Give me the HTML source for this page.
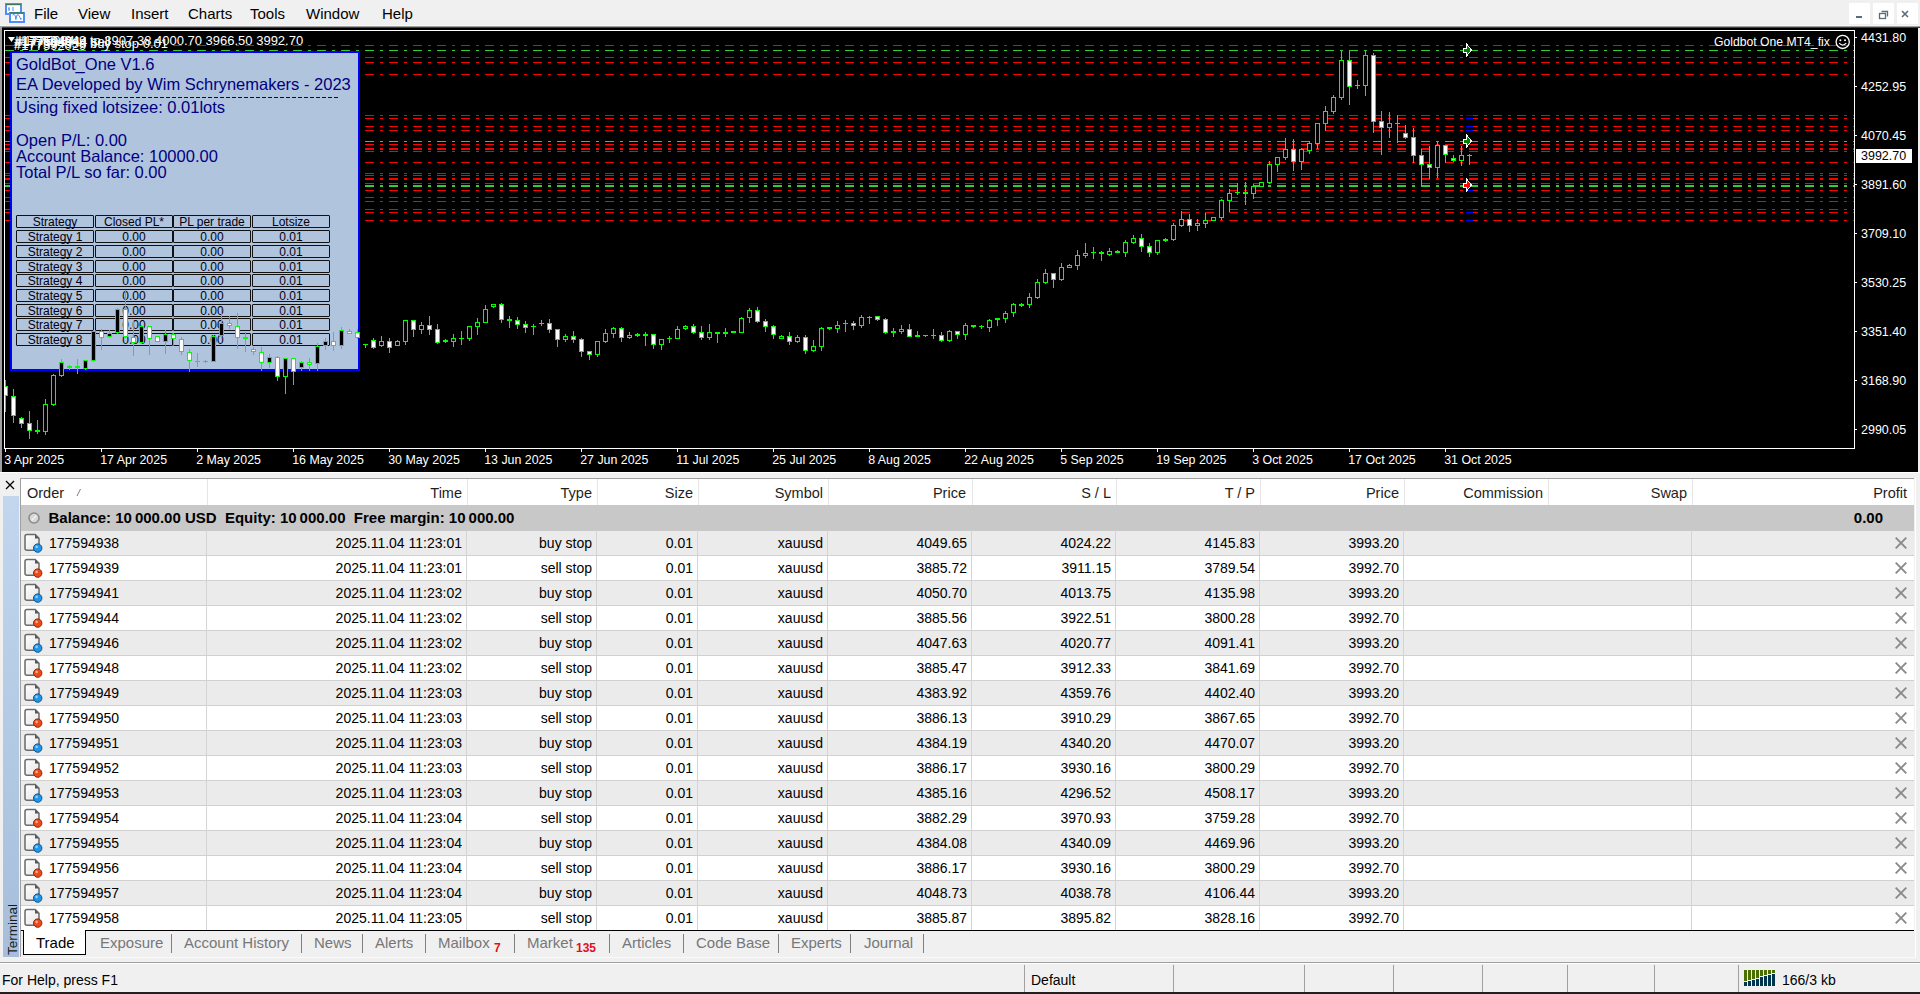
<!DOCTYPE html><html><head><meta charset="utf-8"><style>
*{margin:0;padding:0;box-sizing:border-box}
html,body{width:1920px;height:994px;overflow:hidden;background:#f0f0f0;font-family:"Liberation Sans", sans-serif;position:relative}
.a{position:absolute;white-space:nowrap;line-height:1}
.menu{font-size:15px;color:#000;top:6px}
.ax{font-size:11px;color:#fff;font-family:"Liberation Sans", sans-serif}
.pn{font-size:16.5px;color:#000080}
.tc{position:absolute;height:13px;border:1px solid #111;border-radius:1px;font-size:12px;color:#000010;text-align:center;line-height:12px;background:#b0c4de;white-space:nowrap}
.th{font-size:14.5px;color:#1e1e1e;top:485.7px}
.td{font-size:14px;color:#000}
.tab{font-size:15px;color:#777;top:934.7px}
.sb{font-size:14px;color:#000;top:973.4px}
</style></head><body>
<svg class="a" style="left:0;top:0" width="30" height="26" viewBox="0 0 30 26">
<rect x="6" y="4" width="15" height="10" fill="#fff" stroke="#4f8ef7" stroke-width="2"/>
<rect x="6" y="4" width="15" height="1.2" fill="#3d7a5a"/>
<path d="M9 7 V11 M8 9 H10 M13 7 V11" stroke="#4f8ef7" stroke-width="1"/>
<rect x="10" y="13" width="14" height="9" fill="#fff" stroke="#4f8ef7" stroke-width="2"/>
<rect x="10" y="12.2" width="14" height="1.4" fill="#3d7a5a"/>
<path d="M12.5 15 Q14 13.8 15.3 15.5 L15.8 19.5 M15.8 19.5 L17 15 Q18 14 19 15.5 L20.5 18.5" fill="none" stroke="#4f8ef7" stroke-width="1"/>
<rect x="20" y="18" width="1.6" height="1.6" fill="#4f8ef7"/>
</svg>
<div class="a menu" style="left:34px">File</div>
<div class="a menu" style="left:78px">View</div>
<div class="a menu" style="left:131px">Insert</div>
<div class="a menu" style="left:188px">Charts</div>
<div class="a menu" style="left:250px">Tools</div>
<div class="a menu" style="left:306px">Window</div>
<div class="a menu" style="left:382px">Help</div>
<div class="a" style="left:1849px;top:3px;width:21px;height:21px;background:#fff"></div>
<div class="a" style="left:1873px;top:3px;width:21px;height:21px;background:#fff"></div>
<div class="a" style="left:1897px;top:3px;width:21px;height:21px;background:#fff"></div>
<svg class="a" style="left:1849px;top:3px" width="69" height="21">
<rect x="7" y="13" width="6" height="2" fill="#5a6b7b"/>
<rect x="30.5" y="10.5" width="6" height="5" fill="none" stroke="#5a6b7b" stroke-width="1.3"/>
<path d="M32.5 8.5 H38.5 V13.5" fill="none" stroke="#5a6b7b" stroke-width="1.3"/>
<path d="M53 8 L59 14 M59 8 L53 14" stroke="#5a6b7b" stroke-width="1.6"/>
</svg>
<div class="a" style="left:0;top:25px;width:1920px;height:1px;background:#f6f6f6"></div>
<div class="a" style="left:0;top:26px;width:1920px;height:1px;background:#a0a0a0"></div>
<div class="a" style="left:0;top:27px;width:1920px;height:1px;background:#404040"></div>
<div class="a" style="left:0;top:26px;width:2px;height:446px;background:#a0a0a0"></div>
<div class="a" style="left:2px;top:28px;width:1916px;height:444px;background:#000"></div>
<svg class="a" style="left:0;top:0" width="1920" height="472" shape-rendering="crispEdges">
<defs>
<pattern id="ddr" x="5" y="0" width="24" height="2" patternUnits="userSpaceOnUse"><rect x="0" y="0" width="9" height="2" fill="#ff0000"/><rect x="15" y="0" width="3" height="2" fill="#ff0000"/></pattern>
<pattern id="ddg" x="5" y="0" width="24" height="2" patternUnits="userSpaceOnUse"><rect x="0" y="0" width="9" height="2" fill="#32cd32"/><rect x="15" y="0" width="3" height="2" fill="#32cd32"/></pattern>
</defs>
<rect x="4" y="30" width="1851" height="1" fill="#fff"/>
<rect x="4" y="30" width="1" height="419" fill="#fff"/>
<rect x="1854" y="30" width="1" height="419" fill="#fff"/>
<rect x="4" y="448" width="1851" height="1" fill="#fff"/>
<rect x="5" y="45" width="1849" height="1" fill="url(#ddr)"/>
<rect x="5" y="50" width="1849" height="1" fill="url(#ddg)"/>
<rect x="5" y="57" width="1849" height="1" fill="url(#ddr)"/>
<rect x="5" y="62" width="1849" height="1" fill="url(#ddr)"/>
<rect x="5" y="74" width="1849" height="1" fill="url(#ddr)"/>
<rect x="5" y="115" width="1849" height="1" fill="url(#ddr)"/>
<rect x="5" y="118" width="1849" height="1" fill="url(#ddr)"/>
<rect x="5" y="126" width="1849" height="1" fill="url(#ddr)"/>
<rect x="5" y="130" width="1849" height="1" fill="url(#ddr)"/>
<rect x="5" y="141" width="1849" height="1" fill="url(#ddg)"/>
<rect x="5" y="144" width="1849" height="1" fill="url(#ddr)"/>
<rect x="5" y="148" width="1849" height="1" fill="url(#ddr)"/>
<rect x="5" y="149" width="1849" height="1" fill="url(#ddr)"/>
<rect x="5" y="151" width="1849" height="1" fill="url(#ddr)"/>
<rect x="5" y="162" width="1849" height="1" fill="url(#ddr)"/>
<rect x="5" y="173" width="1849" height="1" fill="url(#ddr)"/>
<rect x="5" y="175" width="1849" height="1" fill="url(#ddr)"/>
<rect x="5" y="178" width="1849" height="1" fill="url(#ddr)"/>
<rect x="5" y="179" width="1849" height="1" fill="url(#ddr)"/>
<rect x="5" y="183" width="1849" height="1" fill="url(#ddr)"/>
<rect x="5" y="185" width="1849" height="1" fill="url(#ddg)"/>
<rect x="5" y="186" width="1849" height="1" fill="url(#ddg)"/>
<rect x="5" y="190" width="1849" height="1" fill="url(#ddr)"/>
<rect x="5" y="197" width="1849" height="1" fill="url(#ddr)"/>
<rect x="5" y="201" width="1849" height="1" fill="url(#ddr)"/>
<rect x="5" y="209" width="1849" height="1" fill="url(#ddr)"/>
<rect x="5" y="212" width="1849" height="1" fill="url(#ddr)"/>
<rect x="5" y="220" width="1849" height="1" fill="url(#ddr)"/>
<rect x="1466" y="45" width="7" height="1" fill="#0000ff"/>
<rect x="1466" y="115" width="7" height="1" fill="#0000ff"/>
<rect x="1466" y="118" width="7" height="1" fill="#0000ff"/>
<rect x="1466" y="126" width="7" height="1" fill="#0000ff"/>
<rect x="1466" y="130" width="7" height="1" fill="#0000ff"/>
<rect x="1466" y="190" width="7" height="1" fill="#0000ff"/>
<rect x="1466" y="197" width="7" height="1" fill="#0000ff"/>
<rect x="1466" y="201" width="7" height="1" fill="#0000ff"/>
<rect x="1466" y="209" width="7" height="1" fill="#0000ff"/>
<rect x="1466" y="212" width="7" height="1" fill="#0000ff"/>
<rect x="1466" y="220" width="7" height="1" fill="#0000ff"/>
<rect x="10" y="51" width="350" height="320" fill="#0000ff"/>
<rect x="12" y="53" width="346" height="316" fill="#b0c4de"/>
</svg>
<div class="a pn" style="left:16px;top:55.73px">GoldBot_One V1.6</div>
<div class="a pn" style="left:16px;top:75.73px">EA Developed by Wim Schrynemakers - 2023</div>
<div class="a pn" style="left:16px;top:99.43px">Using fixed lotsizee: 0.01lots</div>
<div class="a pn" style="left:16px;top:131.63px">Open P/L: 0.00</div>
<div class="a pn" style="left:16px;top:147.63px">Account Balance: 10000.00</div>
<div class="a pn" style="left:16px;top:163.63px">Total P/L so far: 0.00</div>
<svg class="a" style="left:16px;top:97px" width="323" height="1"><rect x="0" y="0" width="323" height="1" fill="url(#pdash)"/><defs><pattern id="pdash" x="0" y="0" width="6" height="1" patternUnits="userSpaceOnUse"><rect width="4" height="1" fill="#000080"/></pattern></defs></svg>
<div class="tc" style="left:16px;top:215px;width:78px">Strategy</div>
<div class="tc" style="left:95px;top:215px;width:78px">Closed PL*</div>
<div class="tc" style="left:173px;top:215px;width:78px">PL per trade</div>
<div class="tc" style="left:252px;top:215px;width:78px">Lotsize</div>
<div class="tc" style="left:16px;top:230px;width:78px">Strategy 1</div>
<div class="tc" style="left:95px;top:230px;width:78px">0.00</div>
<div class="tc" style="left:173px;top:230px;width:78px">0.00</div>
<div class="tc" style="left:252px;top:230px;width:78px">0.01</div>
<div class="tc" style="left:16px;top:245px;width:78px">Strategy 2</div>
<div class="tc" style="left:95px;top:245px;width:78px">0.00</div>
<div class="tc" style="left:173px;top:245px;width:78px">0.00</div>
<div class="tc" style="left:252px;top:245px;width:78px">0.01</div>
<div class="tc" style="left:16px;top:260px;width:78px">Strategy 3</div>
<div class="tc" style="left:95px;top:260px;width:78px">0.00</div>
<div class="tc" style="left:173px;top:260px;width:78px">0.00</div>
<div class="tc" style="left:252px;top:260px;width:78px">0.01</div>
<div class="tc" style="left:16px;top:274px;width:78px">Strategy 4</div>
<div class="tc" style="left:95px;top:274px;width:78px">0.00</div>
<div class="tc" style="left:173px;top:274px;width:78px">0.00</div>
<div class="tc" style="left:252px;top:274px;width:78px">0.01</div>
<div class="tc" style="left:16px;top:289px;width:78px">Strategy 5</div>
<div class="tc" style="left:95px;top:289px;width:78px">0.00</div>
<div class="tc" style="left:173px;top:289px;width:78px">0.00</div>
<div class="tc" style="left:252px;top:289px;width:78px">0.01</div>
<div class="tc" style="left:16px;top:304px;width:78px">Strategy 6</div>
<div class="tc" style="left:95px;top:304px;width:78px">0.00</div>
<div class="tc" style="left:173px;top:304px;width:78px">0.00</div>
<div class="tc" style="left:252px;top:304px;width:78px">0.01</div>
<div class="tc" style="left:16px;top:318px;width:78px">Strategy 7</div>
<div class="tc" style="left:95px;top:318px;width:78px">0.00</div>
<div class="tc" style="left:173px;top:318px;width:78px">0.00</div>
<div class="tc" style="left:252px;top:318px;width:78px">0.01</div>
<div class="tc" style="left:16px;top:333px;width:78px">Strategy 8</div>
<div class="tc" style="left:95px;top:333px;width:78px">0.00</div>
<div class="tc" style="left:173px;top:333px;width:78px">0.00</div>
<div class="tc" style="left:252px;top:333px;width:78px">0.01</div>
<svg class="a" style="left:0;top:0" width="1920" height="472" shape-rendering="crispEdges"><defs><clipPath id="cc"><rect x="5" y="31" width="1849" height="417"/></clipPath></defs><g clip-path="url(#cc)">
<rect x="5" y="380" width="1" height="32" fill="#00ff00"/>
<rect x="3" y="386" width="5" height="10" fill="#00ff00"/>
<rect x="4" y="387" width="3" height="8" fill="#ffffff"/>
<rect x="13" y="389" width="1" height="34" fill="#00ff00"/>
<rect x="11" y="396" width="5" height="20" fill="#00ff00"/>
<rect x="12" y="397" width="3" height="18" fill="#ffffff"/>
<rect x="21" y="417" width="1" height="11" fill="#00ff00"/>
<rect x="19" y="418" width="5" height="6" fill="#00ff00"/>
<rect x="20" y="419" width="3" height="4" fill="#ffffff"/>
<rect x="29" y="411" width="1" height="28" fill="#00ff00"/>
<rect x="27" y="423" width="5" height="8" fill="#00ff00"/>
<rect x="28" y="424" width="3" height="6" fill="#ffffff"/>
<rect x="37" y="420" width="1" height="14" fill="#00ff00"/>
<rect x="35" y="430" width="5" height="2" fill="#00ff00"/>
<rect x="45" y="399" width="1" height="36" fill="#00ff00"/>
<rect x="43" y="404" width="5" height="28" fill="#00ff00"/>
<rect x="44" y="405" width="3" height="26" fill="#000000"/>
<rect x="53" y="374" width="1" height="32" fill="#00ff00"/>
<rect x="51" y="375" width="5" height="30" fill="#00ff00"/>
<rect x="52" y="376" width="3" height="28" fill="#000000"/>
<rect x="61" y="359" width="1" height="18" fill="#00ff00"/>
<rect x="59" y="362" width="5" height="14" fill="#00ff00"/>
<rect x="60" y="363" width="3" height="12" fill="#000000"/>
<rect x="69" y="365" width="1" height="5" fill="#00ff00"/>
<rect x="67" y="366" width="5" height="2" fill="#00ff00"/>
<rect x="77" y="359" width="1" height="15" fill="#00ff00"/>
<rect x="75" y="366" width="5" height="2" fill="#00ff00"/>
<rect x="85" y="360" width="1" height="10" fill="#00ff00"/>
<rect x="83" y="360" width="5" height="9" fill="#00ff00"/>
<rect x="84" y="361" width="3" height="7" fill="#000000"/>
<rect x="93" y="330" width="1" height="32" fill="#00ff00"/>
<rect x="91" y="331" width="5" height="30" fill="#00ff00"/>
<rect x="92" y="332" width="3" height="28" fill="#000000"/>
<rect x="101" y="329" width="1" height="21" fill="#00ff00"/>
<rect x="99" y="331" width="5" height="7" fill="#00ff00"/>
<rect x="100" y="332" width="3" height="5" fill="#ffffff"/>
<rect x="109" y="330" width="1" height="8" fill="#00ff00"/>
<rect x="107" y="333" width="5" height="4" fill="#00ff00"/>
<rect x="108" y="334" width="3" height="2" fill="#000000"/>
<rect x="117" y="308" width="1" height="26" fill="#00ff00"/>
<rect x="115" y="309" width="5" height="24" fill="#00ff00"/>
<rect x="116" y="310" width="3" height="22" fill="#000000"/>
<rect x="125" y="290" width="1" height="48" fill="#00ff00"/>
<rect x="123" y="309" width="5" height="28" fill="#00ff00"/>
<rect x="124" y="310" width="3" height="26" fill="#ffffff"/>
<rect x="133" y="321" width="1" height="35" fill="#00ff00"/>
<rect x="131" y="337" width="5" height="6" fill="#00ff00"/>
<rect x="132" y="338" width="3" height="4" fill="#ffffff"/>
<rect x="141" y="325" width="1" height="19" fill="#00ff00"/>
<rect x="139" y="326" width="5" height="17" fill="#00ff00"/>
<rect x="140" y="327" width="3" height="15" fill="#000000"/>
<rect x="149" y="326" width="1" height="29" fill="#00ff00"/>
<rect x="147" y="326" width="5" height="13" fill="#00ff00"/>
<rect x="148" y="327" width="3" height="11" fill="#ffffff"/>
<rect x="157" y="336" width="1" height="6" fill="#00ff00"/>
<rect x="155" y="336" width="5" height="6" fill="#00ff00"/>
<rect x="156" y="337" width="3" height="4" fill="#ffffff"/>
<rect x="165" y="330" width="1" height="24" fill="#00ff00"/>
<rect x="163" y="334" width="5" height="8" fill="#00ff00"/>
<rect x="164" y="335" width="3" height="6" fill="#000000"/>
<rect x="173" y="333" width="1" height="12" fill="#00ff00"/>
<rect x="171" y="334" width="5" height="5" fill="#00ff00"/>
<rect x="172" y="335" width="3" height="3" fill="#ffffff"/>
<rect x="181" y="337" width="1" height="18" fill="#00ff00"/>
<rect x="179" y="339" width="5" height="13" fill="#00ff00"/>
<rect x="180" y="340" width="3" height="11" fill="#ffffff"/>
<rect x="189" y="349" width="1" height="23" fill="#00ff00"/>
<rect x="187" y="352" width="5" height="9" fill="#00ff00"/>
<rect x="188" y="353" width="3" height="7" fill="#ffffff"/>
<rect x="197" y="353" width="1" height="14" fill="#00ff00"/>
<rect x="195" y="361" width="5" height="1" fill="#00ff00"/>
<rect x="205" y="360" width="1" height="3" fill="#00ff00"/>
<rect x="203" y="361" width="5" height="1" fill="#00ff00"/>
<rect x="213" y="335" width="1" height="27" fill="#00ff00"/>
<rect x="211" y="336" width="5" height="26" fill="#00ff00"/>
<rect x="212" y="337" width="3" height="24" fill="#000000"/>
<rect x="221" y="308" width="1" height="31" fill="#00ff00"/>
<rect x="219" y="323" width="5" height="13" fill="#00ff00"/>
<rect x="220" y="324" width="3" height="11" fill="#000000"/>
<rect x="229" y="316" width="1" height="13" fill="#00ff00"/>
<rect x="227" y="323" width="5" height="3" fill="#00ff00"/>
<rect x="228" y="324" width="3" height="1" fill="#ffffff"/>
<rect x="237" y="313" width="1" height="36" fill="#00ff00"/>
<rect x="235" y="326" width="5" height="12" fill="#00ff00"/>
<rect x="236" y="327" width="3" height="10" fill="#ffffff"/>
<rect x="245" y="332" width="1" height="20" fill="#00ff00"/>
<rect x="243" y="337" width="5" height="2" fill="#00ff00"/>
<rect x="253" y="347" width="1" height="8" fill="#00ff00"/>
<rect x="251" y="349" width="5" height="3" fill="#00ff00"/>
<rect x="252" y="350" width="3" height="1" fill="#ffffff"/>
<rect x="261" y="347" width="1" height="24" fill="#00ff00"/>
<rect x="259" y="352" width="5" height="11" fill="#00ff00"/>
<rect x="260" y="353" width="3" height="9" fill="#ffffff"/>
<rect x="269" y="354" width="1" height="14" fill="#00ff00"/>
<rect x="267" y="357" width="5" height="6" fill="#00ff00"/>
<rect x="268" y="358" width="3" height="4" fill="#000000"/>
<rect x="277" y="356" width="1" height="25" fill="#00ff00"/>
<rect x="275" y="357" width="5" height="20" fill="#00ff00"/>
<rect x="276" y="358" width="3" height="18" fill="#ffffff"/>
<rect x="285" y="358" width="1" height="36" fill="#00ff00"/>
<rect x="283" y="358" width="5" height="19" fill="#00ff00"/>
<rect x="284" y="359" width="3" height="17" fill="#000000"/>
<rect x="293" y="358" width="1" height="27" fill="#00ff00"/>
<rect x="291" y="358" width="5" height="14" fill="#00ff00"/>
<rect x="292" y="359" width="3" height="12" fill="#ffffff"/>
<rect x="301" y="361" width="1" height="10" fill="#00ff00"/>
<rect x="299" y="362" width="5" height="6" fill="#00ff00"/>
<rect x="300" y="363" width="3" height="4" fill="#000000"/>
<rect x="309" y="358" width="1" height="13" fill="#00ff00"/>
<rect x="307" y="362" width="5" height="3" fill="#00ff00"/>
<rect x="308" y="363" width="3" height="1" fill="#ffffff"/>
<rect x="317" y="343" width="1" height="28" fill="#00ff00"/>
<rect x="315" y="346" width="5" height="18" fill="#00ff00"/>
<rect x="316" y="347" width="3" height="16" fill="#000000"/>
<rect x="325" y="338" width="1" height="12" fill="#00ff00"/>
<rect x="323" y="341" width="5" height="5" fill="#00ff00"/>
<rect x="324" y="342" width="3" height="3" fill="#000000"/>
<rect x="333" y="332" width="1" height="19" fill="#00ff00"/>
<rect x="331" y="341" width="5" height="5" fill="#00ff00"/>
<rect x="332" y="342" width="3" height="3" fill="#ffffff"/>
<rect x="341" y="327" width="1" height="22" fill="#00ff00"/>
<rect x="339" y="330" width="5" height="16" fill="#00ff00"/>
<rect x="340" y="331" width="3" height="14" fill="#000000"/>
<rect x="349" y="329" width="1" height="5" fill="#00ff00"/>
<rect x="347" y="331" width="5" height="3" fill="#00ff00"/>
<rect x="348" y="332" width="3" height="1" fill="#ffffff"/>
<rect x="357" y="329" width="1" height="10" fill="#00ff00"/>
<rect x="355" y="332" width="5" height="6" fill="#00ff00"/>
<rect x="356" y="333" width="3" height="4" fill="#ffffff"/>
<rect x="365" y="344" width="1" height="4" fill="#00ff00"/>
<rect x="363" y="344" width="5" height="1" fill="#00ff00"/>
<rect x="373" y="338" width="1" height="11" fill="#00ff00"/>
<rect x="371" y="340" width="5" height="8" fill="#00ff00"/>
<rect x="372" y="341" width="3" height="6" fill="#ffffff"/>
<rect x="381" y="336" width="1" height="11" fill="#00ff00"/>
<rect x="379" y="341" width="5" height="5" fill="#00ff00"/>
<rect x="380" y="342" width="3" height="3" fill="#000000"/>
<rect x="389" y="338" width="1" height="15" fill="#00ff00"/>
<rect x="387" y="341" width="5" height="7" fill="#00ff00"/>
<rect x="388" y="342" width="3" height="5" fill="#ffffff"/>
<rect x="397" y="340" width="1" height="6" fill="#00ff00"/>
<rect x="395" y="341" width="5" height="5" fill="#00ff00"/>
<rect x="396" y="342" width="3" height="3" fill="#000000"/>
<rect x="405" y="320" width="1" height="25" fill="#00ff00"/>
<rect x="403" y="320" width="5" height="22" fill="#00ff00"/>
<rect x="404" y="321" width="3" height="20" fill="#000000"/>
<rect x="413" y="320" width="1" height="17" fill="#00ff00"/>
<rect x="411" y="320" width="5" height="10" fill="#00ff00"/>
<rect x="412" y="321" width="3" height="8" fill="#ffffff"/>
<rect x="421" y="322" width="1" height="12" fill="#00ff00"/>
<rect x="419" y="325" width="5" height="5" fill="#00ff00"/>
<rect x="420" y="326" width="3" height="3" fill="#000000"/>
<rect x="429" y="316" width="1" height="19" fill="#00ff00"/>
<rect x="427" y="325" width="5" height="5" fill="#00ff00"/>
<rect x="428" y="326" width="3" height="3" fill="#ffffff"/>
<rect x="437" y="324" width="1" height="20" fill="#00ff00"/>
<rect x="435" y="329" width="5" height="14" fill="#00ff00"/>
<rect x="436" y="330" width="3" height="12" fill="#ffffff"/>
<rect x="445" y="339" width="1" height="4" fill="#00ff00"/>
<rect x="443" y="340" width="5" height="2" fill="#00ff00"/>
<rect x="453" y="334" width="1" height="13" fill="#00ff00"/>
<rect x="451" y="338" width="5" height="4" fill="#00ff00"/>
<rect x="452" y="339" width="3" height="2" fill="#000000"/>
<rect x="461" y="331" width="1" height="14" fill="#00ff00"/>
<rect x="459" y="338" width="5" height="1" fill="#00ff00"/>
<rect x="469" y="326" width="1" height="15" fill="#00ff00"/>
<rect x="467" y="326" width="5" height="13" fill="#00ff00"/>
<rect x="468" y="327" width="3" height="11" fill="#000000"/>
<rect x="477" y="318" width="1" height="17" fill="#00ff00"/>
<rect x="475" y="322" width="5" height="5" fill="#00ff00"/>
<rect x="476" y="323" width="3" height="3" fill="#000000"/>
<rect x="485" y="305" width="1" height="18" fill="#00ff00"/>
<rect x="483" y="309" width="5" height="14" fill="#00ff00"/>
<rect x="484" y="310" width="3" height="12" fill="#000000"/>
<rect x="493" y="304" width="1" height="4" fill="#00ff00"/>
<rect x="491" y="304" width="5" height="3" fill="#00ff00"/>
<rect x="492" y="305" width="3" height="1" fill="#000000"/>
<rect x="501" y="303" width="1" height="20" fill="#00ff00"/>
<rect x="499" y="304" width="5" height="16" fill="#00ff00"/>
<rect x="500" y="305" width="3" height="14" fill="#ffffff"/>
<rect x="509" y="316" width="1" height="12" fill="#00ff00"/>
<rect x="507" y="319" width="5" height="2" fill="#00ff00"/>
<rect x="517" y="317" width="1" height="12" fill="#00ff00"/>
<rect x="515" y="320" width="5" height="5" fill="#00ff00"/>
<rect x="516" y="321" width="3" height="3" fill="#ffffff"/>
<rect x="525" y="321" width="1" height="12" fill="#00ff00"/>
<rect x="523" y="324" width="5" height="4" fill="#00ff00"/>
<rect x="524" y="325" width="3" height="2" fill="#ffffff"/>
<rect x="533" y="324" width="1" height="11" fill="#00ff00"/>
<rect x="531" y="326" width="5" height="1" fill="#00ff00"/>
<rect x="541" y="320" width="1" height="6" fill="#00ff00"/>
<rect x="539" y="323" width="5" height="1" fill="#00ff00"/>
<rect x="549" y="319" width="1" height="14" fill="#00ff00"/>
<rect x="547" y="323" width="5" height="7" fill="#00ff00"/>
<rect x="548" y="324" width="3" height="5" fill="#ffffff"/>
<rect x="557" y="329" width="1" height="18" fill="#00ff00"/>
<rect x="555" y="329" width="5" height="11" fill="#00ff00"/>
<rect x="556" y="330" width="3" height="9" fill="#ffffff"/>
<rect x="565" y="334" width="1" height="8" fill="#00ff00"/>
<rect x="563" y="336" width="5" height="4" fill="#00ff00"/>
<rect x="564" y="337" width="3" height="2" fill="#000000"/>
<rect x="573" y="331" width="1" height="12" fill="#00ff00"/>
<rect x="571" y="336" width="5" height="4" fill="#00ff00"/>
<rect x="572" y="337" width="3" height="2" fill="#ffffff"/>
<rect x="581" y="338" width="1" height="19" fill="#00ff00"/>
<rect x="579" y="339" width="5" height="13" fill="#00ff00"/>
<rect x="580" y="340" width="3" height="11" fill="#ffffff"/>
<rect x="589" y="351" width="1" height="9" fill="#00ff00"/>
<rect x="587" y="351" width="5" height="4" fill="#00ff00"/>
<rect x="588" y="352" width="3" height="2" fill="#ffffff"/>
<rect x="597" y="341" width="1" height="16" fill="#00ff00"/>
<rect x="595" y="341" width="5" height="14" fill="#00ff00"/>
<rect x="596" y="342" width="3" height="12" fill="#000000"/>
<rect x="605" y="329" width="1" height="14" fill="#00ff00"/>
<rect x="603" y="333" width="5" height="9" fill="#00ff00"/>
<rect x="604" y="334" width="3" height="7" fill="#000000"/>
<rect x="613" y="327" width="1" height="11" fill="#00ff00"/>
<rect x="611" y="328" width="5" height="6" fill="#00ff00"/>
<rect x="612" y="329" width="3" height="4" fill="#000000"/>
<rect x="621" y="327" width="1" height="15" fill="#00ff00"/>
<rect x="619" y="328" width="5" height="10" fill="#00ff00"/>
<rect x="620" y="329" width="3" height="8" fill="#ffffff"/>
<rect x="629" y="332" width="1" height="7" fill="#00ff00"/>
<rect x="627" y="335" width="5" height="3" fill="#00ff00"/>
<rect x="628" y="336" width="3" height="1" fill="#000000"/>
<rect x="637" y="333" width="1" height="4" fill="#00ff00"/>
<rect x="635" y="334" width="5" height="2" fill="#00ff00"/>
<rect x="645" y="332" width="1" height="14" fill="#00ff00"/>
<rect x="643" y="334" width="5" height="2" fill="#00ff00"/>
<rect x="653" y="334" width="1" height="15" fill="#00ff00"/>
<rect x="651" y="334" width="5" height="11" fill="#00ff00"/>
<rect x="652" y="335" width="3" height="9" fill="#ffffff"/>
<rect x="661" y="339" width="1" height="11" fill="#00ff00"/>
<rect x="659" y="339" width="5" height="6" fill="#00ff00"/>
<rect x="660" y="340" width="3" height="4" fill="#000000"/>
<rect x="669" y="336" width="1" height="7" fill="#00ff00"/>
<rect x="667" y="338" width="5" height="1" fill="#00ff00"/>
<rect x="677" y="326" width="1" height="13" fill="#00ff00"/>
<rect x="675" y="329" width="5" height="10" fill="#00ff00"/>
<rect x="676" y="330" width="3" height="8" fill="#000000"/>
<rect x="685" y="325" width="1" height="5" fill="#00ff00"/>
<rect x="683" y="326" width="5" height="3" fill="#00ff00"/>
<rect x="684" y="327" width="3" height="1" fill="#000000"/>
<rect x="693" y="324" width="1" height="10" fill="#00ff00"/>
<rect x="691" y="326" width="5" height="7" fill="#00ff00"/>
<rect x="692" y="327" width="3" height="5" fill="#ffffff"/>
<rect x="701" y="326" width="1" height="14" fill="#00ff00"/>
<rect x="699" y="332" width="5" height="6" fill="#00ff00"/>
<rect x="700" y="333" width="3" height="4" fill="#ffffff"/>
<rect x="709" y="324" width="1" height="16" fill="#00ff00"/>
<rect x="707" y="332" width="5" height="6" fill="#00ff00"/>
<rect x="708" y="333" width="3" height="4" fill="#000000"/>
<rect x="717" y="332" width="1" height="11" fill="#00ff00"/>
<rect x="715" y="332" width="5" height="2" fill="#00ff00"/>
<rect x="725" y="328" width="1" height="9" fill="#00ff00"/>
<rect x="723" y="332" width="5" height="2" fill="#00ff00"/>
<rect x="731" y="331" width="5" height="2" fill="#00ff00"/>
<rect x="741" y="317" width="1" height="16" fill="#00ff00"/>
<rect x="739" y="318" width="5" height="15" fill="#00ff00"/>
<rect x="740" y="319" width="3" height="13" fill="#000000"/>
<rect x="749" y="308" width="1" height="15" fill="#00ff00"/>
<rect x="747" y="310" width="5" height="8" fill="#00ff00"/>
<rect x="748" y="311" width="3" height="6" fill="#000000"/>
<rect x="757" y="307" width="1" height="16" fill="#00ff00"/>
<rect x="755" y="310" width="5" height="12" fill="#00ff00"/>
<rect x="756" y="311" width="3" height="10" fill="#ffffff"/>
<rect x="765" y="319" width="1" height="13" fill="#00ff00"/>
<rect x="763" y="321" width="5" height="6" fill="#00ff00"/>
<rect x="764" y="322" width="3" height="4" fill="#ffffff"/>
<rect x="773" y="325" width="1" height="14" fill="#00ff00"/>
<rect x="771" y="326" width="5" height="9" fill="#00ff00"/>
<rect x="772" y="327" width="3" height="7" fill="#ffffff"/>
<rect x="781" y="335" width="1" height="4" fill="#00ff00"/>
<rect x="779" y="336" width="5" height="3" fill="#00ff00"/>
<rect x="780" y="337" width="3" height="1" fill="#000000"/>
<rect x="789" y="332" width="1" height="13" fill="#00ff00"/>
<rect x="787" y="336" width="5" height="6" fill="#00ff00"/>
<rect x="788" y="337" width="3" height="4" fill="#ffffff"/>
<rect x="797" y="335" width="1" height="8" fill="#00ff00"/>
<rect x="795" y="337" width="5" height="5" fill="#00ff00"/>
<rect x="796" y="338" width="3" height="3" fill="#000000"/>
<rect x="805" y="335" width="1" height="19" fill="#00ff00"/>
<rect x="803" y="337" width="5" height="14" fill="#00ff00"/>
<rect x="804" y="338" width="3" height="12" fill="#ffffff"/>
<rect x="813" y="340" width="1" height="12" fill="#00ff00"/>
<rect x="811" y="346" width="5" height="5" fill="#00ff00"/>
<rect x="812" y="347" width="3" height="3" fill="#000000"/>
<rect x="821" y="327" width="1" height="24" fill="#00ff00"/>
<rect x="819" y="328" width="5" height="19" fill="#00ff00"/>
<rect x="820" y="329" width="3" height="17" fill="#000000"/>
<rect x="829" y="327" width="1" height="3" fill="#00ff00"/>
<rect x="827" y="327" width="5" height="2" fill="#00ff00"/>
<rect x="837" y="321" width="1" height="12" fill="#00ff00"/>
<rect x="835" y="325" width="5" height="4" fill="#00ff00"/>
<rect x="836" y="326" width="3" height="2" fill="#000000"/>
<rect x="845" y="320" width="1" height="12" fill="#00ff00"/>
<rect x="843" y="323" width="5" height="1" fill="#00ff00"/>
<rect x="853" y="321" width="1" height="9" fill="#00ff00"/>
<rect x="851" y="323" width="5" height="3" fill="#00ff00"/>
<rect x="852" y="324" width="3" height="1" fill="#ffffff"/>
<rect x="861" y="315" width="1" height="13" fill="#00ff00"/>
<rect x="859" y="317" width="5" height="9" fill="#00ff00"/>
<rect x="860" y="318" width="3" height="7" fill="#000000"/>
<rect x="869" y="316" width="1" height="8" fill="#00ff00"/>
<rect x="867" y="317" width="5" height="1" fill="#00ff00"/>
<rect x="877" y="316" width="1" height="5" fill="#00ff00"/>
<rect x="875" y="316" width="5" height="4" fill="#00ff00"/>
<rect x="876" y="317" width="3" height="2" fill="#ffffff"/>
<rect x="885" y="318" width="1" height="16" fill="#00ff00"/>
<rect x="883" y="319" width="5" height="14" fill="#00ff00"/>
<rect x="884" y="320" width="3" height="12" fill="#ffffff"/>
<rect x="893" y="328" width="1" height="9" fill="#00ff00"/>
<rect x="891" y="331" width="5" height="2" fill="#00ff00"/>
<rect x="901" y="325" width="1" height="9" fill="#00ff00"/>
<rect x="899" y="329" width="5" height="3" fill="#00ff00"/>
<rect x="900" y="330" width="3" height="1" fill="#000000"/>
<rect x="909" y="324" width="1" height="13" fill="#00ff00"/>
<rect x="907" y="329" width="5" height="8" fill="#00ff00"/>
<rect x="908" y="330" width="3" height="6" fill="#ffffff"/>
<rect x="917" y="331" width="1" height="5" fill="#00ff00"/>
<rect x="915" y="335" width="5" height="2" fill="#00ff00"/>
<rect x="925" y="335" width="1" height="2" fill="#00ff00"/>
<rect x="923" y="335" width="5" height="1" fill="#00ff00"/>
<rect x="933" y="329" width="1" height="10" fill="#00ff00"/>
<rect x="931" y="335" width="5" height="1" fill="#00ff00"/>
<rect x="941" y="332" width="1" height="10" fill="#00ff00"/>
<rect x="939" y="335" width="5" height="6" fill="#00ff00"/>
<rect x="940" y="336" width="3" height="4" fill="#ffffff"/>
<rect x="949" y="330" width="1" height="12" fill="#00ff00"/>
<rect x="947" y="331" width="5" height="10" fill="#00ff00"/>
<rect x="948" y="332" width="3" height="8" fill="#000000"/>
<rect x="957" y="331" width="1" height="8" fill="#00ff00"/>
<rect x="955" y="331" width="5" height="4" fill="#00ff00"/>
<rect x="956" y="332" width="3" height="2" fill="#ffffff"/>
<rect x="965" y="323" width="1" height="17" fill="#00ff00"/>
<rect x="963" y="325" width="5" height="10" fill="#00ff00"/>
<rect x="964" y="326" width="3" height="8" fill="#000000"/>
<rect x="973" y="325" width="1" height="3" fill="#00ff00"/>
<rect x="971" y="325" width="5" height="2" fill="#00ff00"/>
<rect x="981" y="325" width="1" height="4" fill="#00ff00"/>
<rect x="979" y="326" width="5" height="1" fill="#00ff00"/>
<rect x="989" y="319" width="1" height="13" fill="#00ff00"/>
<rect x="987" y="320" width="5" height="8" fill="#00ff00"/>
<rect x="988" y="321" width="3" height="6" fill="#000000"/>
<rect x="997" y="318" width="1" height="8" fill="#00ff00"/>
<rect x="995" y="318" width="5" height="2" fill="#00ff00"/>
<rect x="1005" y="311" width="1" height="12" fill="#00ff00"/>
<rect x="1003" y="313" width="5" height="6" fill="#00ff00"/>
<rect x="1004" y="314" width="3" height="4" fill="#000000"/>
<rect x="1013" y="303" width="1" height="14" fill="#00ff00"/>
<rect x="1011" y="304" width="5" height="9" fill="#00ff00"/>
<rect x="1012" y="305" width="3" height="7" fill="#000000"/>
<rect x="1021" y="303" width="1" height="4" fill="#00ff00"/>
<rect x="1019" y="304" width="5" height="2" fill="#00ff00"/>
<rect x="1029" y="293" width="1" height="15" fill="#00ff00"/>
<rect x="1027" y="297" width="5" height="8" fill="#00ff00"/>
<rect x="1028" y="298" width="3" height="6" fill="#000000"/>
<rect x="1037" y="279" width="1" height="20" fill="#00ff00"/>
<rect x="1035" y="282" width="5" height="16" fill="#00ff00"/>
<rect x="1036" y="283" width="3" height="14" fill="#000000"/>
<rect x="1045" y="269" width="1" height="15" fill="#00ff00"/>
<rect x="1043" y="273" width="5" height="10" fill="#00ff00"/>
<rect x="1044" y="274" width="3" height="8" fill="#000000"/>
<rect x="1053" y="273" width="1" height="15" fill="#00ff00"/>
<rect x="1051" y="273" width="5" height="7" fill="#00ff00"/>
<rect x="1052" y="274" width="3" height="5" fill="#ffffff"/>
<rect x="1061" y="263" width="1" height="18" fill="#00ff00"/>
<rect x="1059" y="267" width="5" height="13" fill="#00ff00"/>
<rect x="1060" y="268" width="3" height="11" fill="#000000"/>
<rect x="1069" y="264" width="1" height="4" fill="#00ff00"/>
<rect x="1067" y="265" width="5" height="3" fill="#00ff00"/>
<rect x="1068" y="266" width="3" height="1" fill="#000000"/>
<rect x="1077" y="250" width="1" height="20" fill="#00ff00"/>
<rect x="1075" y="255" width="5" height="11" fill="#00ff00"/>
<rect x="1076" y="256" width="3" height="9" fill="#000000"/>
<rect x="1085" y="243" width="1" height="15" fill="#00ff00"/>
<rect x="1083" y="253" width="5" height="3" fill="#00ff00"/>
<rect x="1084" y="254" width="3" height="1" fill="#000000"/>
<rect x="1093" y="247" width="1" height="12" fill="#00ff00"/>
<rect x="1091" y="252" width="5" height="1" fill="#00ff00"/>
<rect x="1101" y="251" width="1" height="10" fill="#00ff00"/>
<rect x="1099" y="252" width="5" height="2" fill="#00ff00"/>
<rect x="1109" y="248" width="1" height="8" fill="#00ff00"/>
<rect x="1107" y="251" width="5" height="4" fill="#00ff00"/>
<rect x="1108" y="252" width="3" height="2" fill="#000000"/>
<rect x="1117" y="250" width="1" height="3" fill="#00ff00"/>
<rect x="1115" y="251" width="5" height="2" fill="#00ff00"/>
<rect x="1125" y="240" width="1" height="17" fill="#00ff00"/>
<rect x="1123" y="242" width="5" height="11" fill="#00ff00"/>
<rect x="1124" y="243" width="3" height="9" fill="#000000"/>
<rect x="1133" y="235" width="1" height="9" fill="#00ff00"/>
<rect x="1131" y="238" width="5" height="5" fill="#00ff00"/>
<rect x="1132" y="239" width="3" height="3" fill="#000000"/>
<rect x="1141" y="234" width="1" height="18" fill="#00ff00"/>
<rect x="1139" y="238" width="5" height="9" fill="#00ff00"/>
<rect x="1140" y="239" width="3" height="7" fill="#ffffff"/>
<rect x="1149" y="243" width="1" height="14" fill="#00ff00"/>
<rect x="1147" y="246" width="5" height="7" fill="#00ff00"/>
<rect x="1148" y="247" width="3" height="5" fill="#ffffff"/>
<rect x="1157" y="240" width="1" height="15" fill="#00ff00"/>
<rect x="1155" y="240" width="5" height="13" fill="#00ff00"/>
<rect x="1156" y="241" width="3" height="11" fill="#000000"/>
<rect x="1165" y="238" width="1" height="4" fill="#00ff00"/>
<rect x="1163" y="239" width="5" height="2" fill="#00ff00"/>
<rect x="1173" y="223" width="1" height="18" fill="#00ff00"/>
<rect x="1171" y="225" width="5" height="15" fill="#00ff00"/>
<rect x="1172" y="226" width="3" height="13" fill="#000000"/>
<rect x="1181" y="211" width="1" height="16" fill="#00ff00"/>
<rect x="1179" y="219" width="5" height="7" fill="#00ff00"/>
<rect x="1180" y="220" width="3" height="5" fill="#000000"/>
<rect x="1189" y="214" width="1" height="18" fill="#00ff00"/>
<rect x="1187" y="219" width="5" height="7" fill="#00ff00"/>
<rect x="1188" y="220" width="3" height="5" fill="#ffffff"/>
<rect x="1197" y="219" width="1" height="12" fill="#00ff00"/>
<rect x="1195" y="223" width="5" height="3" fill="#00ff00"/>
<rect x="1196" y="224" width="3" height="1" fill="#000000"/>
<rect x="1205" y="213" width="1" height="15" fill="#00ff00"/>
<rect x="1203" y="220" width="5" height="4" fill="#00ff00"/>
<rect x="1204" y="221" width="3" height="2" fill="#000000"/>
<rect x="1213" y="217" width="1" height="4" fill="#00ff00"/>
<rect x="1211" y="217" width="5" height="4" fill="#00ff00"/>
<rect x="1212" y="218" width="3" height="2" fill="#000000"/>
<rect x="1221" y="199" width="1" height="21" fill="#00ff00"/>
<rect x="1219" y="200" width="5" height="18" fill="#00ff00"/>
<rect x="1220" y="201" width="3" height="16" fill="#000000"/>
<rect x="1229" y="189" width="1" height="23" fill="#00ff00"/>
<rect x="1227" y="193" width="5" height="8" fill="#00ff00"/>
<rect x="1228" y="194" width="3" height="6" fill="#000000"/>
<rect x="1237" y="183" width="1" height="12" fill="#00ff00"/>
<rect x="1235" y="192" width="5" height="1" fill="#00ff00"/>
<rect x="1245" y="182" width="1" height="23" fill="#00ff00"/>
<rect x="1243" y="192" width="5" height="2" fill="#00ff00"/>
<rect x="1253" y="184" width="1" height="15" fill="#00ff00"/>
<rect x="1251" y="186" width="5" height="8" fill="#00ff00"/>
<rect x="1252" y="187" width="3" height="6" fill="#000000"/>
<rect x="1261" y="182" width="1" height="5" fill="#00ff00"/>
<rect x="1259" y="182" width="5" height="5" fill="#00ff00"/>
<rect x="1260" y="183" width="3" height="3" fill="#000000"/>
<rect x="1269" y="161" width="1" height="23" fill="#00ff00"/>
<rect x="1267" y="164" width="5" height="19" fill="#00ff00"/>
<rect x="1268" y="165" width="3" height="17" fill="#000000"/>
<rect x="1277" y="157" width="1" height="15" fill="#00ff00"/>
<rect x="1275" y="157" width="5" height="8" fill="#00ff00"/>
<rect x="1276" y="158" width="3" height="6" fill="#000000"/>
<rect x="1285" y="138" width="1" height="22" fill="#00ff00"/>
<rect x="1283" y="149" width="5" height="9" fill="#00ff00"/>
<rect x="1284" y="150" width="3" height="7" fill="#000000"/>
<rect x="1293" y="139" width="1" height="32" fill="#00ff00"/>
<rect x="1291" y="149" width="5" height="13" fill="#00ff00"/>
<rect x="1292" y="150" width="3" height="11" fill="#ffffff"/>
<rect x="1301" y="148" width="1" height="22" fill="#00ff00"/>
<rect x="1299" y="149" width="5" height="13" fill="#00ff00"/>
<rect x="1300" y="150" width="3" height="11" fill="#000000"/>
<rect x="1309" y="141" width="1" height="13" fill="#00ff00"/>
<rect x="1307" y="143" width="5" height="8" fill="#00ff00"/>
<rect x="1308" y="144" width="3" height="6" fill="#000000"/>
<rect x="1317" y="123" width="1" height="26" fill="#00ff00"/>
<rect x="1315" y="123" width="5" height="21" fill="#00ff00"/>
<rect x="1316" y="124" width="3" height="19" fill="#000000"/>
<rect x="1325" y="106" width="1" height="25" fill="#00ff00"/>
<rect x="1323" y="111" width="5" height="13" fill="#00ff00"/>
<rect x="1324" y="112" width="3" height="11" fill="#000000"/>
<rect x="1333" y="95" width="1" height="19" fill="#00ff00"/>
<rect x="1331" y="97" width="5" height="15" fill="#00ff00"/>
<rect x="1332" y="98" width="3" height="13" fill="#000000"/>
<rect x="1341" y="51" width="1" height="49" fill="#00ff00"/>
<rect x="1339" y="60" width="5" height="38" fill="#00ff00"/>
<rect x="1340" y="61" width="3" height="36" fill="#000000"/>
<rect x="1349" y="51" width="1" height="54" fill="#00ff00"/>
<rect x="1347" y="60" width="5" height="27" fill="#00ff00"/>
<rect x="1348" y="61" width="3" height="25" fill="#ffffff"/>
<rect x="1357" y="80" width="1" height="9" fill="#00ff00"/>
<rect x="1355" y="85" width="5" height="1" fill="#00ff00"/>
<rect x="1365" y="51" width="1" height="45" fill="#00ff00"/>
<rect x="1363" y="55" width="5" height="31" fill="#00ff00"/>
<rect x="1364" y="56" width="3" height="29" fill="#000000"/>
<rect x="1373" y="53" width="1" height="80" fill="#00ff00"/>
<rect x="1371" y="55" width="5" height="67" fill="#00ff00"/>
<rect x="1372" y="56" width="3" height="65" fill="#ffffff"/>
<rect x="1381" y="111" width="1" height="44" fill="#00ff00"/>
<rect x="1379" y="121" width="5" height="7" fill="#00ff00"/>
<rect x="1380" y="122" width="3" height="5" fill="#ffffff"/>
<rect x="1389" y="112" width="1" height="26" fill="#00ff00"/>
<rect x="1387" y="123" width="5" height="5" fill="#00ff00"/>
<rect x="1388" y="124" width="3" height="3" fill="#000000"/>
<rect x="1397" y="115" width="1" height="28" fill="#00ff00"/>
<rect x="1395" y="123" width="5" height="1" fill="#00ff00"/>
<rect x="1405" y="125" width="1" height="14" fill="#00ff00"/>
<rect x="1403" y="133" width="5" height="5" fill="#00ff00"/>
<rect x="1404" y="134" width="3" height="3" fill="#ffffff"/>
<rect x="1413" y="128" width="1" height="35" fill="#00ff00"/>
<rect x="1411" y="137" width="5" height="19" fill="#00ff00"/>
<rect x="1412" y="138" width="3" height="17" fill="#ffffff"/>
<rect x="1421" y="149" width="1" height="38" fill="#00ff00"/>
<rect x="1419" y="155" width="5" height="10" fill="#00ff00"/>
<rect x="1420" y="156" width="3" height="8" fill="#ffffff"/>
<rect x="1429" y="146" width="1" height="33" fill="#00ff00"/>
<rect x="1427" y="164" width="5" height="4" fill="#00ff00"/>
<rect x="1428" y="165" width="3" height="2" fill="#ffffff"/>
<rect x="1437" y="141" width="1" height="37" fill="#00ff00"/>
<rect x="1435" y="145" width="5" height="23" fill="#00ff00"/>
<rect x="1436" y="146" width="3" height="21" fill="#000000"/>
<rect x="1445" y="145" width="1" height="18" fill="#00ff00"/>
<rect x="1443" y="145" width="5" height="10" fill="#00ff00"/>
<rect x="1444" y="146" width="3" height="8" fill="#ffffff"/>
<rect x="1453" y="155" width="1" height="7" fill="#00ff00"/>
<rect x="1451" y="158" width="5" height="3" fill="#00ff00"/>
<rect x="1452" y="159" width="3" height="1" fill="#ffffff"/>
<rect x="1461" y="146" width="1" height="20" fill="#00ff00"/>
<rect x="1459" y="155" width="5" height="6" fill="#00ff00"/>
<rect x="1460" y="156" width="3" height="4" fill="#000000"/>
<rect x="1469" y="154" width="1" height="11" fill="#00ff00"/>
<rect x="1467" y="155" width="5" height="1" fill="#00ff00"/>
</g>
<path d="M1463.5 48 h3 v-4 l5 6 l-5 6 v-4 h-3 z" fill="#008000" stroke="#fff" stroke-width="1"/>
<path d="M1463.5 139 h3 v-4 l5 6 l-5 6 v-4 h-3 z" fill="#008000" stroke="#fff" stroke-width="1"/>
<path d="M1463.5 183 h3 v-4 l5 6 l-5 6 v-4 h-3 z" fill="#ff0000" stroke="#fff" stroke-width="1"/>
</svg>
<svg class="a" style="left:8px;top:37px" width="8" height="6"><path d="M0 0 H7 L3.5 5 Z" fill="#fff"/></svg>
<div class="a ax" style="left:14px;top:33.5px;font-size:13px">#177594949 tp 3907.38 4000.70 3966.50 3992.70</div>
<div class="a ax" style="left:14px;top:37px;font-size:13px">#177594938 buy stop 0.01</div>
<div class="a ax" style="left:15px;top:35px;font-size:13px">#177594944 sell</div>
<div class="a ax" style="left:14px;top:39px;font-size:13px">#177592029</div>
<div class="a ax" style="left:17px;top:34px;font-size:13px">#1775984</div>
<div class="a ax" style="left:1714px;top:36px;font-size:12.2px">Goldbot One MT4_fix</div>
<svg class="a" style="left:1834px;top:34px" width="18" height="18"><circle cx="8.7" cy="7.9" r="6.6" fill="none" stroke="#fff" stroke-width="1.3"/><circle cx="6.4" cy="6.2" r="1" fill="#fff"/><circle cx="11" cy="6.2" r="1" fill="#fff"/><path d="M5.2 9.2 Q8.7 13 12.2 9.2" fill="none" stroke="#fff" stroke-width="1.2"/></svg>
<div class="a" style="left:1854px;top:37px;width:3px;height:1px;background:#fff"></div>
<div class="a ax" style="left:1861px;top:31.5px;font-size:12.5px">4431.80</div>
<div class="a" style="left:1854px;top:86px;width:3px;height:1px;background:#fff"></div>
<div class="a ax" style="left:1861px;top:80.5px;font-size:12.5px">4252.95</div>
<div class="a" style="left:1854px;top:135px;width:3px;height:1px;background:#fff"></div>
<div class="a ax" style="left:1861px;top:129.5px;font-size:12.5px">4070.45</div>
<div class="a" style="left:1854px;top:184px;width:3px;height:1px;background:#fff"></div>
<div class="a ax" style="left:1861px;top:178.5px;font-size:12.5px">3891.60</div>
<div class="a" style="left:1854px;top:233px;width:3px;height:1px;background:#fff"></div>
<div class="a ax" style="left:1861px;top:227.5px;font-size:12.5px">3709.10</div>
<div class="a" style="left:1854px;top:282px;width:3px;height:1px;background:#fff"></div>
<div class="a ax" style="left:1861px;top:276.5px;font-size:12.5px">3530.25</div>
<div class="a" style="left:1854px;top:331px;width:3px;height:1px;background:#fff"></div>
<div class="a ax" style="left:1861px;top:325.5px;font-size:12.5px">3351.40</div>
<div class="a" style="left:1854px;top:380px;width:3px;height:1px;background:#fff"></div>
<div class="a ax" style="left:1861px;top:374.5px;font-size:12.5px">3168.90</div>
<div class="a" style="left:1854px;top:429px;width:3px;height:1px;background:#fff"></div>
<div class="a ax" style="left:1861px;top:423.5px;font-size:12.5px">2990.05</div>
<div class="a" style="left:1856px;top:149px;width:56px;height:14px;background:#fff"></div>
<div class="a" style="left:1861px;top:150px;font-size:12.5px;color:#000">3992.70</div>
<div class="a" style="left:5px;top:448px;width:1px;height:4px;background:#fff"></div>
<div class="a ax" style="left:4.2px;top:454px;font-size:12.4px">3 Apr 2025</div>
<div class="a" style="left:101px;top:448px;width:1px;height:4px;background:#fff"></div>
<div class="a ax" style="left:100.2px;top:454px;font-size:12.4px">17 Apr 2025</div>
<div class="a" style="left:197px;top:448px;width:1px;height:4px;background:#fff"></div>
<div class="a ax" style="left:196.2px;top:454px;font-size:12.4px">2 May 2025</div>
<div class="a" style="left:293px;top:448px;width:1px;height:4px;background:#fff"></div>
<div class="a ax" style="left:292.2px;top:454px;font-size:12.4px">16 May 2025</div>
<div class="a" style="left:389px;top:448px;width:1px;height:4px;background:#fff"></div>
<div class="a ax" style="left:388.2px;top:454px;font-size:12.4px">30 May 2025</div>
<div class="a" style="left:485px;top:448px;width:1px;height:4px;background:#fff"></div>
<div class="a ax" style="left:484.2px;top:454px;font-size:12.4px">13 Jun 2025</div>
<div class="a" style="left:581px;top:448px;width:1px;height:4px;background:#fff"></div>
<div class="a ax" style="left:580.2px;top:454px;font-size:12.4px">27 Jun 2025</div>
<div class="a" style="left:677px;top:448px;width:1px;height:4px;background:#fff"></div>
<div class="a ax" style="left:676.2px;top:454px;font-size:12.4px">11 Jul 2025</div>
<div class="a" style="left:773px;top:448px;width:1px;height:4px;background:#fff"></div>
<div class="a ax" style="left:772.2px;top:454px;font-size:12.4px">25 Jul 2025</div>
<div class="a" style="left:869px;top:448px;width:1px;height:4px;background:#fff"></div>
<div class="a ax" style="left:868.2px;top:454px;font-size:12.4px">8 Aug 2025</div>
<div class="a" style="left:965px;top:448px;width:1px;height:4px;background:#fff"></div>
<div class="a ax" style="left:964.2px;top:454px;font-size:12.4px">22 Aug 2025</div>
<div class="a" style="left:1061px;top:448px;width:1px;height:4px;background:#fff"></div>
<div class="a ax" style="left:1060.2px;top:454px;font-size:12.4px">5 Sep 2025</div>
<div class="a" style="left:1157px;top:448px;width:1px;height:4px;background:#fff"></div>
<div class="a ax" style="left:1156.2px;top:454px;font-size:12.4px">19 Sep 2025</div>
<div class="a" style="left:1253px;top:448px;width:1px;height:4px;background:#fff"></div>
<div class="a ax" style="left:1252.2px;top:454px;font-size:12.4px">3 Oct 2025</div>
<div class="a" style="left:1349px;top:448px;width:1px;height:4px;background:#fff"></div>
<div class="a ax" style="left:1348.2px;top:454px;font-size:12.4px">17 Oct 2025</div>
<div class="a" style="left:1445px;top:448px;width:1px;height:4px;background:#fff"></div>
<div class="a ax" style="left:1444.2px;top:454px;font-size:12.4px">31 Oct 2025</div>
<div class="a" style="left:0;top:472px;width:1920px;height:1px;background:#fff"></div>
<svg class="a" style="left:5px;top:480px" width="10" height="10"><path d="M1 1 L9 9 M9 1 L1 9" stroke="#000" stroke-width="1.3"/></svg>
<div class="a" style="left:3px;top:496px;width:16px;height:461px;background:linear-gradient(#c2d7ee,#a6bedb)"></div>
<div class="a" style="left:4.5px;top:957px;transform-origin:0 0;transform:rotate(-90deg);font-size:13.5px;color:#1a1a1a;width:60px;height:16px;line-height:16px;padding-left:2px">Terminal</div>
<div class="a" style="left:20px;top:478px;width:1894px;height:1px;background:#a0a0a0"></div>
<div class="a" style="left:20px;top:479px;width:1894px;height:26px;background:#fff"></div>
<div class="a" style="left:20px;top:478px;width:1px;height:479px;background:#a0a0a0;z-index:2"></div>
<div class="a" style="left:1915px;top:478px;width:1px;height:480px;background:#fff"></div>
<div class="a" style="left:20px;top:957px;width:1896px;height:1px;background:#fafafa"></div>
<div class="a" style="left:20px;top:530px;width:1894px;height:25px;background:#ebebeb"></div>
<div class="a" style="left:20px;top:555px;width:1894px;height:25px;background:#ffffff"></div>
<div class="a" style="left:20px;top:555px;width:1894px;height:1px;background:#d0d0d0"></div>
<div class="a" style="left:20px;top:580px;width:1894px;height:25px;background:#ebebeb"></div>
<div class="a" style="left:20px;top:580px;width:1894px;height:1px;background:#d0d0d0"></div>
<div class="a" style="left:20px;top:605px;width:1894px;height:25px;background:#ffffff"></div>
<div class="a" style="left:20px;top:605px;width:1894px;height:1px;background:#d0d0d0"></div>
<div class="a" style="left:20px;top:630px;width:1894px;height:25px;background:#ebebeb"></div>
<div class="a" style="left:20px;top:630px;width:1894px;height:1px;background:#d0d0d0"></div>
<div class="a" style="left:20px;top:655px;width:1894px;height:25px;background:#ffffff"></div>
<div class="a" style="left:20px;top:655px;width:1894px;height:1px;background:#d0d0d0"></div>
<div class="a" style="left:20px;top:680px;width:1894px;height:25px;background:#ebebeb"></div>
<div class="a" style="left:20px;top:680px;width:1894px;height:1px;background:#d0d0d0"></div>
<div class="a" style="left:20px;top:705px;width:1894px;height:25px;background:#ffffff"></div>
<div class="a" style="left:20px;top:705px;width:1894px;height:1px;background:#d0d0d0"></div>
<div class="a" style="left:20px;top:730px;width:1894px;height:25px;background:#ebebeb"></div>
<div class="a" style="left:20px;top:730px;width:1894px;height:1px;background:#d0d0d0"></div>
<div class="a" style="left:20px;top:755px;width:1894px;height:25px;background:#ffffff"></div>
<div class="a" style="left:20px;top:755px;width:1894px;height:1px;background:#d0d0d0"></div>
<div class="a" style="left:20px;top:780px;width:1894px;height:25px;background:#ebebeb"></div>
<div class="a" style="left:20px;top:780px;width:1894px;height:1px;background:#d0d0d0"></div>
<div class="a" style="left:20px;top:805px;width:1894px;height:25px;background:#ffffff"></div>
<div class="a" style="left:20px;top:805px;width:1894px;height:1px;background:#d0d0d0"></div>
<div class="a" style="left:20px;top:830px;width:1894px;height:25px;background:#ebebeb"></div>
<div class="a" style="left:20px;top:830px;width:1894px;height:1px;background:#d0d0d0"></div>
<div class="a" style="left:20px;top:855px;width:1894px;height:25px;background:#ffffff"></div>
<div class="a" style="left:20px;top:855px;width:1894px;height:1px;background:#d0d0d0"></div>
<div class="a" style="left:20px;top:880px;width:1894px;height:25px;background:#ebebeb"></div>
<div class="a" style="left:20px;top:880px;width:1894px;height:1px;background:#d0d0d0"></div>
<div class="a" style="left:20px;top:905px;width:1894px;height:25px;background:#ffffff"></div>
<div class="a" style="left:20px;top:905px;width:1894px;height:1px;background:#d0d0d0"></div>
<div class="a" style="left:20px;top:505px;width:1894px;height:26px;background:#c8c8c8"></div>
<div class="a" style="left:207px;top:479px;width:1px;height:26px;background:#e5e5e5"></div>
<div class="a" style="left:467px;top:479px;width:1px;height:26px;background:#e5e5e5"></div>
<div class="a" style="left:597px;top:479px;width:1px;height:26px;background:#e5e5e5"></div>
<div class="a" style="left:698px;top:479px;width:1px;height:26px;background:#e5e5e5"></div>
<div class="a" style="left:828px;top:479px;width:1px;height:26px;background:#e5e5e5"></div>
<div class="a" style="left:972px;top:479px;width:1px;height:26px;background:#e5e5e5"></div>
<div class="a" style="left:1116px;top:479px;width:1px;height:26px;background:#e5e5e5"></div>
<div class="a" style="left:1260px;top:479px;width:1px;height:26px;background:#e5e5e5"></div>
<div class="a" style="left:1404px;top:479px;width:1px;height:26px;background:#e5e5e5"></div>
<div class="a" style="left:1548px;top:479px;width:1px;height:26px;background:#e5e5e5"></div>
<div class="a" style="left:1692px;top:479px;width:1px;height:26px;background:#e5e5e5"></div>
<div class="a" style="left:206px;top:530px;width:1px;height:400px;background:#d4d4d4"></div>
<div class="a" style="left:466px;top:530px;width:1px;height:400px;background:#d4d4d4"></div>
<div class="a" style="left:596px;top:530px;width:1px;height:400px;background:#d4d4d4"></div>
<div class="a" style="left:697px;top:530px;width:1px;height:400px;background:#d4d4d4"></div>
<div class="a" style="left:827px;top:530px;width:1px;height:400px;background:#d4d4d4"></div>
<div class="a" style="left:971px;top:530px;width:1px;height:400px;background:#d4d4d4"></div>
<div class="a" style="left:1115px;top:530px;width:1px;height:400px;background:#d4d4d4"></div>
<div class="a" style="left:1259px;top:530px;width:1px;height:400px;background:#d4d4d4"></div>
<div class="a" style="left:1403px;top:530px;width:1px;height:400px;background:#d4d4d4"></div>
<div class="a" style="left:1691px;top:530px;width:1px;height:400px;background:#d4d4d4"></div>
<div class="a th" style="left:27px">Order</div>
<div class="a th" style="left:262px;width:200px;text-align:right">Time</div>
<div class="a th" style="left:392px;width:200px;text-align:right">Type</div>
<div class="a th" style="left:493px;width:200px;text-align:right">Size</div>
<div class="a th" style="left:623px;width:200px;text-align:right">Symbol</div>
<div class="a th" style="left:766px;width:200px;text-align:right">Price</div>
<div class="a th" style="left:911px;width:200px;text-align:right">S / L</div>
<div class="a th" style="left:1055px;width:200px;text-align:right">T / P</div>
<div class="a th" style="left:1199px;width:200px;text-align:right">Price</div>
<div class="a th" style="left:1343px;width:200px;text-align:right">Commission</div>
<div class="a th" style="left:1487px;width:200px;text-align:right">Swap</div>
<div class="a th" style="left:1707px;width:200px;text-align:right">Profit</div>
<svg class="a" style="left:75px;top:488px" width="8" height="9"><path d="M2 8 L5.5 1" stroke="#808080" stroke-width="1"/></svg>
<svg class="a" style="left:27px;top:511px" width="14" height="14"><circle cx="7" cy="7" r="5" fill="#d8d8d8" stroke="#8c8c8c" stroke-width="1.6"/><path d="M4.5 9.5 L9.5 4.5" stroke="#f4f4f4" stroke-width="1.2"/></svg>
<div class="a" style="left:48.5px;top:509.5px;font-size:15px;font-weight:bold;color:#000">Balance: 10&#8201;000.00 USD&nbsp; Equity: 10&#8201;000.00&nbsp; Free margin: 10&#8201;000.00</div>
<div class="a" style="left:1683px;top:509.5px;width:200px;text-align:right;font-size:15px;font-weight:bold;color:#000">0.00</div>
<svg class="a" style="left:24px;top:533px" width="20" height="22"><defs><linearGradient id="dg0" x1="0" y1="0" x2="1" y2="1"><stop offset="0" stop-color="#fff"/><stop offset="1" stop-color="#e4e4e4"/></linearGradient></defs><path d="M3 1.4 H11.2 L15 5.2 V15.3 Q15 17.3 13 17.3 H3 Q1 17.3 1 15.3 V3.4 Q1 1.4 3 1.4 Z" fill="url(#dg0)" stroke="#6a6a6a" stroke-width="1.5"/><path d="M11 1.5 V5.5 H15 Z" fill="#555"/><circle cx="13.7" cy="15.1" r="4.2" fill="#1e96ea" stroke="#0d4f8a" stroke-width="1"/><circle cx="12.6" cy="13.9" r="1.3" fill="#fff" fill-opacity="0.55"/></svg>
<div class="a td" style="left:49px;top:536px">177594938</div>
<div class="a td" style="left:262px;top:536px;width:200px;text-align:right">2025.11.04 11:23:01</div>
<div class="a td" style="left:392px;top:536px;width:200px;text-align:right">buy stop</div>
<div class="a td" style="left:493px;top:536px;width:200px;text-align:right">0.01</div>
<div class="a td" style="left:623px;top:536px;width:200px;text-align:right">xauusd</div>
<div class="a td" style="left:767px;top:536px;width:200px;text-align:right">4049.65</div>
<div class="a td" style="left:911px;top:536px;width:200px;text-align:right">4024.22</div>
<div class="a td" style="left:1055px;top:536px;width:200px;text-align:right">4145.83</div>
<div class="a td" style="left:1199px;top:536px;width:200px;text-align:right">3993.20</div>
<svg class="a" style="left:1894px;top:536px" width="14" height="14"><path d="M1.7 1.7 L12.3 12.3 M12.3 1.7 L1.7 12.3" stroke="#8a8a8a" stroke-width="1.9"/></svg>
<svg class="a" style="left:24px;top:558px" width="20" height="22"><defs><linearGradient id="dg1" x1="0" y1="0" x2="1" y2="1"><stop offset="0" stop-color="#fff"/><stop offset="1" stop-color="#e4e4e4"/></linearGradient></defs><path d="M3 1.4 H11.2 L15 5.2 V15.3 Q15 17.3 13 17.3 H3 Q1 17.3 1 15.3 V3.4 Q1 1.4 3 1.4 Z" fill="url(#dg1)" stroke="#6a6a6a" stroke-width="1.5"/><path d="M11 1.5 V5.5 H15 Z" fill="#555"/><circle cx="13.7" cy="15.1" r="4.2" fill="#ec4a16" stroke="#8a2408" stroke-width="1"/><circle cx="12.6" cy="13.9" r="1.3" fill="#fff" fill-opacity="0.55"/></svg>
<div class="a td" style="left:49px;top:561px">177594939</div>
<div class="a td" style="left:262px;top:561px;width:200px;text-align:right">2025.11.04 11:23:01</div>
<div class="a td" style="left:392px;top:561px;width:200px;text-align:right">sell stop</div>
<div class="a td" style="left:493px;top:561px;width:200px;text-align:right">0.01</div>
<div class="a td" style="left:623px;top:561px;width:200px;text-align:right">xauusd</div>
<div class="a td" style="left:767px;top:561px;width:200px;text-align:right">3885.72</div>
<div class="a td" style="left:911px;top:561px;width:200px;text-align:right">3911.15</div>
<div class="a td" style="left:1055px;top:561px;width:200px;text-align:right">3789.54</div>
<div class="a td" style="left:1199px;top:561px;width:200px;text-align:right">3992.70</div>
<svg class="a" style="left:1894px;top:561px" width="14" height="14"><path d="M1.7 1.7 L12.3 12.3 M12.3 1.7 L1.7 12.3" stroke="#8a8a8a" stroke-width="1.9"/></svg>
<svg class="a" style="left:24px;top:583px" width="20" height="22"><defs><linearGradient id="dg2" x1="0" y1="0" x2="1" y2="1"><stop offset="0" stop-color="#fff"/><stop offset="1" stop-color="#e4e4e4"/></linearGradient></defs><path d="M3 1.4 H11.2 L15 5.2 V15.3 Q15 17.3 13 17.3 H3 Q1 17.3 1 15.3 V3.4 Q1 1.4 3 1.4 Z" fill="url(#dg2)" stroke="#6a6a6a" stroke-width="1.5"/><path d="M11 1.5 V5.5 H15 Z" fill="#555"/><circle cx="13.7" cy="15.1" r="4.2" fill="#1e96ea" stroke="#0d4f8a" stroke-width="1"/><circle cx="12.6" cy="13.9" r="1.3" fill="#fff" fill-opacity="0.55"/></svg>
<div class="a td" style="left:49px;top:586px">177594941</div>
<div class="a td" style="left:262px;top:586px;width:200px;text-align:right">2025.11.04 11:23:02</div>
<div class="a td" style="left:392px;top:586px;width:200px;text-align:right">buy stop</div>
<div class="a td" style="left:493px;top:586px;width:200px;text-align:right">0.01</div>
<div class="a td" style="left:623px;top:586px;width:200px;text-align:right">xauusd</div>
<div class="a td" style="left:767px;top:586px;width:200px;text-align:right">4050.70</div>
<div class="a td" style="left:911px;top:586px;width:200px;text-align:right">4013.75</div>
<div class="a td" style="left:1055px;top:586px;width:200px;text-align:right">4135.98</div>
<div class="a td" style="left:1199px;top:586px;width:200px;text-align:right">3993.20</div>
<svg class="a" style="left:1894px;top:586px" width="14" height="14"><path d="M1.7 1.7 L12.3 12.3 M12.3 1.7 L1.7 12.3" stroke="#8a8a8a" stroke-width="1.9"/></svg>
<svg class="a" style="left:24px;top:608px" width="20" height="22"><defs><linearGradient id="dg3" x1="0" y1="0" x2="1" y2="1"><stop offset="0" stop-color="#fff"/><stop offset="1" stop-color="#e4e4e4"/></linearGradient></defs><path d="M3 1.4 H11.2 L15 5.2 V15.3 Q15 17.3 13 17.3 H3 Q1 17.3 1 15.3 V3.4 Q1 1.4 3 1.4 Z" fill="url(#dg3)" stroke="#6a6a6a" stroke-width="1.5"/><path d="M11 1.5 V5.5 H15 Z" fill="#555"/><circle cx="13.7" cy="15.1" r="4.2" fill="#ec4a16" stroke="#8a2408" stroke-width="1"/><circle cx="12.6" cy="13.9" r="1.3" fill="#fff" fill-opacity="0.55"/></svg>
<div class="a td" style="left:49px;top:611px">177594944</div>
<div class="a td" style="left:262px;top:611px;width:200px;text-align:right">2025.11.04 11:23:02</div>
<div class="a td" style="left:392px;top:611px;width:200px;text-align:right">sell stop</div>
<div class="a td" style="left:493px;top:611px;width:200px;text-align:right">0.01</div>
<div class="a td" style="left:623px;top:611px;width:200px;text-align:right">xauusd</div>
<div class="a td" style="left:767px;top:611px;width:200px;text-align:right">3885.56</div>
<div class="a td" style="left:911px;top:611px;width:200px;text-align:right">3922.51</div>
<div class="a td" style="left:1055px;top:611px;width:200px;text-align:right">3800.28</div>
<div class="a td" style="left:1199px;top:611px;width:200px;text-align:right">3992.70</div>
<svg class="a" style="left:1894px;top:611px" width="14" height="14"><path d="M1.7 1.7 L12.3 12.3 M12.3 1.7 L1.7 12.3" stroke="#8a8a8a" stroke-width="1.9"/></svg>
<svg class="a" style="left:24px;top:633px" width="20" height="22"><defs><linearGradient id="dg4" x1="0" y1="0" x2="1" y2="1"><stop offset="0" stop-color="#fff"/><stop offset="1" stop-color="#e4e4e4"/></linearGradient></defs><path d="M3 1.4 H11.2 L15 5.2 V15.3 Q15 17.3 13 17.3 H3 Q1 17.3 1 15.3 V3.4 Q1 1.4 3 1.4 Z" fill="url(#dg4)" stroke="#6a6a6a" stroke-width="1.5"/><path d="M11 1.5 V5.5 H15 Z" fill="#555"/><circle cx="13.7" cy="15.1" r="4.2" fill="#1e96ea" stroke="#0d4f8a" stroke-width="1"/><circle cx="12.6" cy="13.9" r="1.3" fill="#fff" fill-opacity="0.55"/></svg>
<div class="a td" style="left:49px;top:636px">177594946</div>
<div class="a td" style="left:262px;top:636px;width:200px;text-align:right">2025.11.04 11:23:02</div>
<div class="a td" style="left:392px;top:636px;width:200px;text-align:right">buy stop</div>
<div class="a td" style="left:493px;top:636px;width:200px;text-align:right">0.01</div>
<div class="a td" style="left:623px;top:636px;width:200px;text-align:right">xauusd</div>
<div class="a td" style="left:767px;top:636px;width:200px;text-align:right">4047.63</div>
<div class="a td" style="left:911px;top:636px;width:200px;text-align:right">4020.77</div>
<div class="a td" style="left:1055px;top:636px;width:200px;text-align:right">4091.41</div>
<div class="a td" style="left:1199px;top:636px;width:200px;text-align:right">3993.20</div>
<svg class="a" style="left:1894px;top:636px" width="14" height="14"><path d="M1.7 1.7 L12.3 12.3 M12.3 1.7 L1.7 12.3" stroke="#8a8a8a" stroke-width="1.9"/></svg>
<svg class="a" style="left:24px;top:658px" width="20" height="22"><defs><linearGradient id="dg5" x1="0" y1="0" x2="1" y2="1"><stop offset="0" stop-color="#fff"/><stop offset="1" stop-color="#e4e4e4"/></linearGradient></defs><path d="M3 1.4 H11.2 L15 5.2 V15.3 Q15 17.3 13 17.3 H3 Q1 17.3 1 15.3 V3.4 Q1 1.4 3 1.4 Z" fill="url(#dg5)" stroke="#6a6a6a" stroke-width="1.5"/><path d="M11 1.5 V5.5 H15 Z" fill="#555"/><circle cx="13.7" cy="15.1" r="4.2" fill="#ec4a16" stroke="#8a2408" stroke-width="1"/><circle cx="12.6" cy="13.9" r="1.3" fill="#fff" fill-opacity="0.55"/></svg>
<div class="a td" style="left:49px;top:661px">177594948</div>
<div class="a td" style="left:262px;top:661px;width:200px;text-align:right">2025.11.04 11:23:02</div>
<div class="a td" style="left:392px;top:661px;width:200px;text-align:right">sell stop</div>
<div class="a td" style="left:493px;top:661px;width:200px;text-align:right">0.01</div>
<div class="a td" style="left:623px;top:661px;width:200px;text-align:right">xauusd</div>
<div class="a td" style="left:767px;top:661px;width:200px;text-align:right">3885.47</div>
<div class="a td" style="left:911px;top:661px;width:200px;text-align:right">3912.33</div>
<div class="a td" style="left:1055px;top:661px;width:200px;text-align:right">3841.69</div>
<div class="a td" style="left:1199px;top:661px;width:200px;text-align:right">3992.70</div>
<svg class="a" style="left:1894px;top:661px" width="14" height="14"><path d="M1.7 1.7 L12.3 12.3 M12.3 1.7 L1.7 12.3" stroke="#8a8a8a" stroke-width="1.9"/></svg>
<svg class="a" style="left:24px;top:683px" width="20" height="22"><defs><linearGradient id="dg6" x1="0" y1="0" x2="1" y2="1"><stop offset="0" stop-color="#fff"/><stop offset="1" stop-color="#e4e4e4"/></linearGradient></defs><path d="M3 1.4 H11.2 L15 5.2 V15.3 Q15 17.3 13 17.3 H3 Q1 17.3 1 15.3 V3.4 Q1 1.4 3 1.4 Z" fill="url(#dg6)" stroke="#6a6a6a" stroke-width="1.5"/><path d="M11 1.5 V5.5 H15 Z" fill="#555"/><circle cx="13.7" cy="15.1" r="4.2" fill="#1e96ea" stroke="#0d4f8a" stroke-width="1"/><circle cx="12.6" cy="13.9" r="1.3" fill="#fff" fill-opacity="0.55"/></svg>
<div class="a td" style="left:49px;top:686px">177594949</div>
<div class="a td" style="left:262px;top:686px;width:200px;text-align:right">2025.11.04 11:23:03</div>
<div class="a td" style="left:392px;top:686px;width:200px;text-align:right">buy stop</div>
<div class="a td" style="left:493px;top:686px;width:200px;text-align:right">0.01</div>
<div class="a td" style="left:623px;top:686px;width:200px;text-align:right">xauusd</div>
<div class="a td" style="left:767px;top:686px;width:200px;text-align:right">4383.92</div>
<div class="a td" style="left:911px;top:686px;width:200px;text-align:right">4359.76</div>
<div class="a td" style="left:1055px;top:686px;width:200px;text-align:right">4402.40</div>
<div class="a td" style="left:1199px;top:686px;width:200px;text-align:right">3993.20</div>
<svg class="a" style="left:1894px;top:686px" width="14" height="14"><path d="M1.7 1.7 L12.3 12.3 M12.3 1.7 L1.7 12.3" stroke="#8a8a8a" stroke-width="1.9"/></svg>
<svg class="a" style="left:24px;top:708px" width="20" height="22"><defs><linearGradient id="dg7" x1="0" y1="0" x2="1" y2="1"><stop offset="0" stop-color="#fff"/><stop offset="1" stop-color="#e4e4e4"/></linearGradient></defs><path d="M3 1.4 H11.2 L15 5.2 V15.3 Q15 17.3 13 17.3 H3 Q1 17.3 1 15.3 V3.4 Q1 1.4 3 1.4 Z" fill="url(#dg7)" stroke="#6a6a6a" stroke-width="1.5"/><path d="M11 1.5 V5.5 H15 Z" fill="#555"/><circle cx="13.7" cy="15.1" r="4.2" fill="#ec4a16" stroke="#8a2408" stroke-width="1"/><circle cx="12.6" cy="13.9" r="1.3" fill="#fff" fill-opacity="0.55"/></svg>
<div class="a td" style="left:49px;top:711px">177594950</div>
<div class="a td" style="left:262px;top:711px;width:200px;text-align:right">2025.11.04 11:23:03</div>
<div class="a td" style="left:392px;top:711px;width:200px;text-align:right">sell stop</div>
<div class="a td" style="left:493px;top:711px;width:200px;text-align:right">0.01</div>
<div class="a td" style="left:623px;top:711px;width:200px;text-align:right">xauusd</div>
<div class="a td" style="left:767px;top:711px;width:200px;text-align:right">3886.13</div>
<div class="a td" style="left:911px;top:711px;width:200px;text-align:right">3910.29</div>
<div class="a td" style="left:1055px;top:711px;width:200px;text-align:right">3867.65</div>
<div class="a td" style="left:1199px;top:711px;width:200px;text-align:right">3992.70</div>
<svg class="a" style="left:1894px;top:711px" width="14" height="14"><path d="M1.7 1.7 L12.3 12.3 M12.3 1.7 L1.7 12.3" stroke="#8a8a8a" stroke-width="1.9"/></svg>
<svg class="a" style="left:24px;top:733px" width="20" height="22"><defs><linearGradient id="dg8" x1="0" y1="0" x2="1" y2="1"><stop offset="0" stop-color="#fff"/><stop offset="1" stop-color="#e4e4e4"/></linearGradient></defs><path d="M3 1.4 H11.2 L15 5.2 V15.3 Q15 17.3 13 17.3 H3 Q1 17.3 1 15.3 V3.4 Q1 1.4 3 1.4 Z" fill="url(#dg8)" stroke="#6a6a6a" stroke-width="1.5"/><path d="M11 1.5 V5.5 H15 Z" fill="#555"/><circle cx="13.7" cy="15.1" r="4.2" fill="#1e96ea" stroke="#0d4f8a" stroke-width="1"/><circle cx="12.6" cy="13.9" r="1.3" fill="#fff" fill-opacity="0.55"/></svg>
<div class="a td" style="left:49px;top:736px">177594951</div>
<div class="a td" style="left:262px;top:736px;width:200px;text-align:right">2025.11.04 11:23:03</div>
<div class="a td" style="left:392px;top:736px;width:200px;text-align:right">buy stop</div>
<div class="a td" style="left:493px;top:736px;width:200px;text-align:right">0.01</div>
<div class="a td" style="left:623px;top:736px;width:200px;text-align:right">xauusd</div>
<div class="a td" style="left:767px;top:736px;width:200px;text-align:right">4384.19</div>
<div class="a td" style="left:911px;top:736px;width:200px;text-align:right">4340.20</div>
<div class="a td" style="left:1055px;top:736px;width:200px;text-align:right">4470.07</div>
<div class="a td" style="left:1199px;top:736px;width:200px;text-align:right">3993.20</div>
<svg class="a" style="left:1894px;top:736px" width="14" height="14"><path d="M1.7 1.7 L12.3 12.3 M12.3 1.7 L1.7 12.3" stroke="#8a8a8a" stroke-width="1.9"/></svg>
<svg class="a" style="left:24px;top:758px" width="20" height="22"><defs><linearGradient id="dg9" x1="0" y1="0" x2="1" y2="1"><stop offset="0" stop-color="#fff"/><stop offset="1" stop-color="#e4e4e4"/></linearGradient></defs><path d="M3 1.4 H11.2 L15 5.2 V15.3 Q15 17.3 13 17.3 H3 Q1 17.3 1 15.3 V3.4 Q1 1.4 3 1.4 Z" fill="url(#dg9)" stroke="#6a6a6a" stroke-width="1.5"/><path d="M11 1.5 V5.5 H15 Z" fill="#555"/><circle cx="13.7" cy="15.1" r="4.2" fill="#ec4a16" stroke="#8a2408" stroke-width="1"/><circle cx="12.6" cy="13.9" r="1.3" fill="#fff" fill-opacity="0.55"/></svg>
<div class="a td" style="left:49px;top:761px">177594952</div>
<div class="a td" style="left:262px;top:761px;width:200px;text-align:right">2025.11.04 11:23:03</div>
<div class="a td" style="left:392px;top:761px;width:200px;text-align:right">sell stop</div>
<div class="a td" style="left:493px;top:761px;width:200px;text-align:right">0.01</div>
<div class="a td" style="left:623px;top:761px;width:200px;text-align:right">xauusd</div>
<div class="a td" style="left:767px;top:761px;width:200px;text-align:right">3886.17</div>
<div class="a td" style="left:911px;top:761px;width:200px;text-align:right">3930.16</div>
<div class="a td" style="left:1055px;top:761px;width:200px;text-align:right">3800.29</div>
<div class="a td" style="left:1199px;top:761px;width:200px;text-align:right">3992.70</div>
<svg class="a" style="left:1894px;top:761px" width="14" height="14"><path d="M1.7 1.7 L12.3 12.3 M12.3 1.7 L1.7 12.3" stroke="#8a8a8a" stroke-width="1.9"/></svg>
<svg class="a" style="left:24px;top:783px" width="20" height="22"><defs><linearGradient id="dg10" x1="0" y1="0" x2="1" y2="1"><stop offset="0" stop-color="#fff"/><stop offset="1" stop-color="#e4e4e4"/></linearGradient></defs><path d="M3 1.4 H11.2 L15 5.2 V15.3 Q15 17.3 13 17.3 H3 Q1 17.3 1 15.3 V3.4 Q1 1.4 3 1.4 Z" fill="url(#dg10)" stroke="#6a6a6a" stroke-width="1.5"/><path d="M11 1.5 V5.5 H15 Z" fill="#555"/><circle cx="13.7" cy="15.1" r="4.2" fill="#1e96ea" stroke="#0d4f8a" stroke-width="1"/><circle cx="12.6" cy="13.9" r="1.3" fill="#fff" fill-opacity="0.55"/></svg>
<div class="a td" style="left:49px;top:786px">177594953</div>
<div class="a td" style="left:262px;top:786px;width:200px;text-align:right">2025.11.04 11:23:03</div>
<div class="a td" style="left:392px;top:786px;width:200px;text-align:right">buy stop</div>
<div class="a td" style="left:493px;top:786px;width:200px;text-align:right">0.01</div>
<div class="a td" style="left:623px;top:786px;width:200px;text-align:right">xauusd</div>
<div class="a td" style="left:767px;top:786px;width:200px;text-align:right">4385.16</div>
<div class="a td" style="left:911px;top:786px;width:200px;text-align:right">4296.52</div>
<div class="a td" style="left:1055px;top:786px;width:200px;text-align:right">4508.17</div>
<div class="a td" style="left:1199px;top:786px;width:200px;text-align:right">3993.20</div>
<svg class="a" style="left:1894px;top:786px" width="14" height="14"><path d="M1.7 1.7 L12.3 12.3 M12.3 1.7 L1.7 12.3" stroke="#8a8a8a" stroke-width="1.9"/></svg>
<svg class="a" style="left:24px;top:808px" width="20" height="22"><defs><linearGradient id="dg11" x1="0" y1="0" x2="1" y2="1"><stop offset="0" stop-color="#fff"/><stop offset="1" stop-color="#e4e4e4"/></linearGradient></defs><path d="M3 1.4 H11.2 L15 5.2 V15.3 Q15 17.3 13 17.3 H3 Q1 17.3 1 15.3 V3.4 Q1 1.4 3 1.4 Z" fill="url(#dg11)" stroke="#6a6a6a" stroke-width="1.5"/><path d="M11 1.5 V5.5 H15 Z" fill="#555"/><circle cx="13.7" cy="15.1" r="4.2" fill="#ec4a16" stroke="#8a2408" stroke-width="1"/><circle cx="12.6" cy="13.9" r="1.3" fill="#fff" fill-opacity="0.55"/></svg>
<div class="a td" style="left:49px;top:811px">177594954</div>
<div class="a td" style="left:262px;top:811px;width:200px;text-align:right">2025.11.04 11:23:04</div>
<div class="a td" style="left:392px;top:811px;width:200px;text-align:right">sell stop</div>
<div class="a td" style="left:493px;top:811px;width:200px;text-align:right">0.01</div>
<div class="a td" style="left:623px;top:811px;width:200px;text-align:right">xauusd</div>
<div class="a td" style="left:767px;top:811px;width:200px;text-align:right">3882.29</div>
<div class="a td" style="left:911px;top:811px;width:200px;text-align:right">3970.93</div>
<div class="a td" style="left:1055px;top:811px;width:200px;text-align:right">3759.28</div>
<div class="a td" style="left:1199px;top:811px;width:200px;text-align:right">3992.70</div>
<svg class="a" style="left:1894px;top:811px" width="14" height="14"><path d="M1.7 1.7 L12.3 12.3 M12.3 1.7 L1.7 12.3" stroke="#8a8a8a" stroke-width="1.9"/></svg>
<svg class="a" style="left:24px;top:833px" width="20" height="22"><defs><linearGradient id="dg12" x1="0" y1="0" x2="1" y2="1"><stop offset="0" stop-color="#fff"/><stop offset="1" stop-color="#e4e4e4"/></linearGradient></defs><path d="M3 1.4 H11.2 L15 5.2 V15.3 Q15 17.3 13 17.3 H3 Q1 17.3 1 15.3 V3.4 Q1 1.4 3 1.4 Z" fill="url(#dg12)" stroke="#6a6a6a" stroke-width="1.5"/><path d="M11 1.5 V5.5 H15 Z" fill="#555"/><circle cx="13.7" cy="15.1" r="4.2" fill="#1e96ea" stroke="#0d4f8a" stroke-width="1"/><circle cx="12.6" cy="13.9" r="1.3" fill="#fff" fill-opacity="0.55"/></svg>
<div class="a td" style="left:49px;top:836px">177594955</div>
<div class="a td" style="left:262px;top:836px;width:200px;text-align:right">2025.11.04 11:23:04</div>
<div class="a td" style="left:392px;top:836px;width:200px;text-align:right">buy stop</div>
<div class="a td" style="left:493px;top:836px;width:200px;text-align:right">0.01</div>
<div class="a td" style="left:623px;top:836px;width:200px;text-align:right">xauusd</div>
<div class="a td" style="left:767px;top:836px;width:200px;text-align:right">4384.08</div>
<div class="a td" style="left:911px;top:836px;width:200px;text-align:right">4340.09</div>
<div class="a td" style="left:1055px;top:836px;width:200px;text-align:right">4469.96</div>
<div class="a td" style="left:1199px;top:836px;width:200px;text-align:right">3993.20</div>
<svg class="a" style="left:1894px;top:836px" width="14" height="14"><path d="M1.7 1.7 L12.3 12.3 M12.3 1.7 L1.7 12.3" stroke="#8a8a8a" stroke-width="1.9"/></svg>
<svg class="a" style="left:24px;top:858px" width="20" height="22"><defs><linearGradient id="dg13" x1="0" y1="0" x2="1" y2="1"><stop offset="0" stop-color="#fff"/><stop offset="1" stop-color="#e4e4e4"/></linearGradient></defs><path d="M3 1.4 H11.2 L15 5.2 V15.3 Q15 17.3 13 17.3 H3 Q1 17.3 1 15.3 V3.4 Q1 1.4 3 1.4 Z" fill="url(#dg13)" stroke="#6a6a6a" stroke-width="1.5"/><path d="M11 1.5 V5.5 H15 Z" fill="#555"/><circle cx="13.7" cy="15.1" r="4.2" fill="#ec4a16" stroke="#8a2408" stroke-width="1"/><circle cx="12.6" cy="13.9" r="1.3" fill="#fff" fill-opacity="0.55"/></svg>
<div class="a td" style="left:49px;top:861px">177594956</div>
<div class="a td" style="left:262px;top:861px;width:200px;text-align:right">2025.11.04 11:23:04</div>
<div class="a td" style="left:392px;top:861px;width:200px;text-align:right">sell stop</div>
<div class="a td" style="left:493px;top:861px;width:200px;text-align:right">0.01</div>
<div class="a td" style="left:623px;top:861px;width:200px;text-align:right">xauusd</div>
<div class="a td" style="left:767px;top:861px;width:200px;text-align:right">3886.17</div>
<div class="a td" style="left:911px;top:861px;width:200px;text-align:right">3930.16</div>
<div class="a td" style="left:1055px;top:861px;width:200px;text-align:right">3800.29</div>
<div class="a td" style="left:1199px;top:861px;width:200px;text-align:right">3992.70</div>
<svg class="a" style="left:1894px;top:861px" width="14" height="14"><path d="M1.7 1.7 L12.3 12.3 M12.3 1.7 L1.7 12.3" stroke="#8a8a8a" stroke-width="1.9"/></svg>
<svg class="a" style="left:24px;top:883px" width="20" height="22"><defs><linearGradient id="dg14" x1="0" y1="0" x2="1" y2="1"><stop offset="0" stop-color="#fff"/><stop offset="1" stop-color="#e4e4e4"/></linearGradient></defs><path d="M3 1.4 H11.2 L15 5.2 V15.3 Q15 17.3 13 17.3 H3 Q1 17.3 1 15.3 V3.4 Q1 1.4 3 1.4 Z" fill="url(#dg14)" stroke="#6a6a6a" stroke-width="1.5"/><path d="M11 1.5 V5.5 H15 Z" fill="#555"/><circle cx="13.7" cy="15.1" r="4.2" fill="#1e96ea" stroke="#0d4f8a" stroke-width="1"/><circle cx="12.6" cy="13.9" r="1.3" fill="#fff" fill-opacity="0.55"/></svg>
<div class="a td" style="left:49px;top:886px">177594957</div>
<div class="a td" style="left:262px;top:886px;width:200px;text-align:right">2025.11.04 11:23:04</div>
<div class="a td" style="left:392px;top:886px;width:200px;text-align:right">buy stop</div>
<div class="a td" style="left:493px;top:886px;width:200px;text-align:right">0.01</div>
<div class="a td" style="left:623px;top:886px;width:200px;text-align:right">xauusd</div>
<div class="a td" style="left:767px;top:886px;width:200px;text-align:right">4048.73</div>
<div class="a td" style="left:911px;top:886px;width:200px;text-align:right">4038.78</div>
<div class="a td" style="left:1055px;top:886px;width:200px;text-align:right">4106.44</div>
<div class="a td" style="left:1199px;top:886px;width:200px;text-align:right">3993.20</div>
<svg class="a" style="left:1894px;top:886px" width="14" height="14"><path d="M1.7 1.7 L12.3 12.3 M12.3 1.7 L1.7 12.3" stroke="#8a8a8a" stroke-width="1.9"/></svg>
<svg class="a" style="left:24px;top:908px" width="20" height="22"><defs><linearGradient id="dg15" x1="0" y1="0" x2="1" y2="1"><stop offset="0" stop-color="#fff"/><stop offset="1" stop-color="#e4e4e4"/></linearGradient></defs><path d="M3 1.4 H11.2 L15 5.2 V15.3 Q15 17.3 13 17.3 H3 Q1 17.3 1 15.3 V3.4 Q1 1.4 3 1.4 Z" fill="url(#dg15)" stroke="#6a6a6a" stroke-width="1.5"/><path d="M11 1.5 V5.5 H15 Z" fill="#555"/><circle cx="13.7" cy="15.1" r="4.2" fill="#ec4a16" stroke="#8a2408" stroke-width="1"/><circle cx="12.6" cy="13.9" r="1.3" fill="#fff" fill-opacity="0.55"/></svg>
<div class="a td" style="left:49px;top:911px">177594958</div>
<div class="a td" style="left:262px;top:911px;width:200px;text-align:right">2025.11.04 11:23:05</div>
<div class="a td" style="left:392px;top:911px;width:200px;text-align:right">sell stop</div>
<div class="a td" style="left:493px;top:911px;width:200px;text-align:right">0.01</div>
<div class="a td" style="left:623px;top:911px;width:200px;text-align:right">xauusd</div>
<div class="a td" style="left:767px;top:911px;width:200px;text-align:right">3885.87</div>
<div class="a td" style="left:911px;top:911px;width:200px;text-align:right">3895.82</div>
<div class="a td" style="left:1055px;top:911px;width:200px;text-align:right">3828.16</div>
<div class="a td" style="left:1199px;top:911px;width:200px;text-align:right">3992.70</div>
<svg class="a" style="left:1894px;top:911px" width="14" height="14"><path d="M1.7 1.7 L12.3 12.3 M12.3 1.7 L1.7 12.3" stroke="#8a8a8a" stroke-width="1.9"/></svg>
<div class="a" style="left:20px;top:930px;width:1894px;height:1px;background:#000"></div>
<div class="a" style="left:23px;top:930px;width:63px;height:25px;background:#fff;border:1px solid #000;border-top:none"></div>
<div class="a" style="left:36px;top:934.7px;font-size:15px;color:#000">Trade</div>
<div class="a tab" style="left:100px">Exposure</div>
<div class="a" style="left:171px;top:934px;width:1px;height:19px;background:#808080"></div>
<div class="a tab" style="left:184px">Account History</div>
<div class="a" style="left:301px;top:934px;width:1px;height:19px;background:#808080"></div>
<div class="a tab" style="left:314px">News</div>
<div class="a" style="left:362px;top:934px;width:1px;height:19px;background:#808080"></div>
<div class="a tab" style="left:375px">Alerts</div>
<div class="a" style="left:425px;top:934px;width:1px;height:19px;background:#808080"></div>
<div class="a tab" style="left:438px">Mailbox</div>
<div class="a" style="left:514px;top:934px;width:1px;height:19px;background:#808080"></div>
<div class="a tab" style="left:527px">Market</div>
<div class="a" style="left:609px;top:934px;width:1px;height:19px;background:#808080"></div>
<div class="a tab" style="left:622px">Articles</div>
<div class="a" style="left:683px;top:934px;width:1px;height:19px;background:#808080"></div>
<div class="a tab" style="left:696px">Code Base</div>
<div class="a" style="left:778px;top:934px;width:1px;height:19px;background:#808080"></div>
<div class="a tab" style="left:791px">Experts</div>
<div class="a" style="left:850px;top:934px;width:1px;height:19px;background:#808080"></div>
<div class="a tab" style="left:864px">Journal</div>
<div class="a" style="left:923px;top:934px;width:1px;height:19px;background:#808080"></div>
<div class="a" style="left:494px;top:941.5px;font-size:12px;font-weight:bold;color:#e01020">7</div>
<div class="a" style="left:576px;top:941.5px;font-size:12px;font-weight:bold;color:#e01020">135</div>
<div class="a" style="left:0;top:962px;width:1920px;height:1px;background:#a0a0a0"></div>
<div class="a" style="left:0;top:963px;width:1920px;height:1px;background:#fff"></div>
<div class="a sb" style="left:2px">For Help, press F1</div>
<div class="a sb" style="left:1031px">Default</div>
<div class="a" style="left:1024px;top:965px;width:1px;height:27px;background:#a0a0a0"></div>
<div class="a" style="left:1173px;top:965px;width:1px;height:27px;background:#a0a0a0"></div>
<div class="a" style="left:1304px;top:965px;width:1px;height:27px;background:#a0a0a0"></div>
<div class="a" style="left:1393px;top:965px;width:1px;height:27px;background:#a0a0a0"></div>
<div class="a" style="left:1482px;top:965px;width:1px;height:27px;background:#a0a0a0"></div>
<div class="a" style="left:1567px;top:965px;width:1px;height:27px;background:#a0a0a0"></div>
<div class="a" style="left:1654px;top:965px;width:1px;height:27px;background:#a0a0a0"></div>
<div class="a" style="left:1738px;top:965px;width:1px;height:27px;background:#a0a0a0"></div>
<svg class="a" style="left:1744px;top:970px" width="32" height="16"><rect x="0" y="0" width="3" height="11" fill="#4b6e00"/><rect x="0" y="12" width="3" height="4" fill="#00354f"/><rect x="4" y="0" width="3" height="10" fill="#4b6e00"/><rect x="4" y="11" width="3" height="5" fill="#00354f"/><rect x="8" y="0" width="3" height="9" fill="#4b6e00"/><rect x="8" y="10" width="3" height="6" fill="#00354f"/><rect x="12" y="0" width="3" height="8" fill="#4b6e00"/><rect x="12" y="9" width="3" height="7" fill="#00354f"/><rect x="16" y="0" width="3" height="6" fill="#4b6e00"/><rect x="16" y="7" width="3" height="9" fill="#00354f"/><rect x="20" y="0" width="3" height="5" fill="#4b6e00"/><rect x="20" y="6" width="3" height="10" fill="#00354f"/><rect x="24" y="0" width="3" height="4" fill="#4b6e00"/><rect x="24" y="5" width="3" height="11" fill="#00354f"/><rect x="28" y="0" width="3" height="3" fill="#4b6e00"/><rect x="28" y="4" width="3" height="12" fill="#00354f"/></svg>
<div class="a sb" style="left:1782px">166/3 kb</div>
<div class="a" style="left:0;top:992px;width:1920px;height:2px;background:#202020"></div>
</body></html>
